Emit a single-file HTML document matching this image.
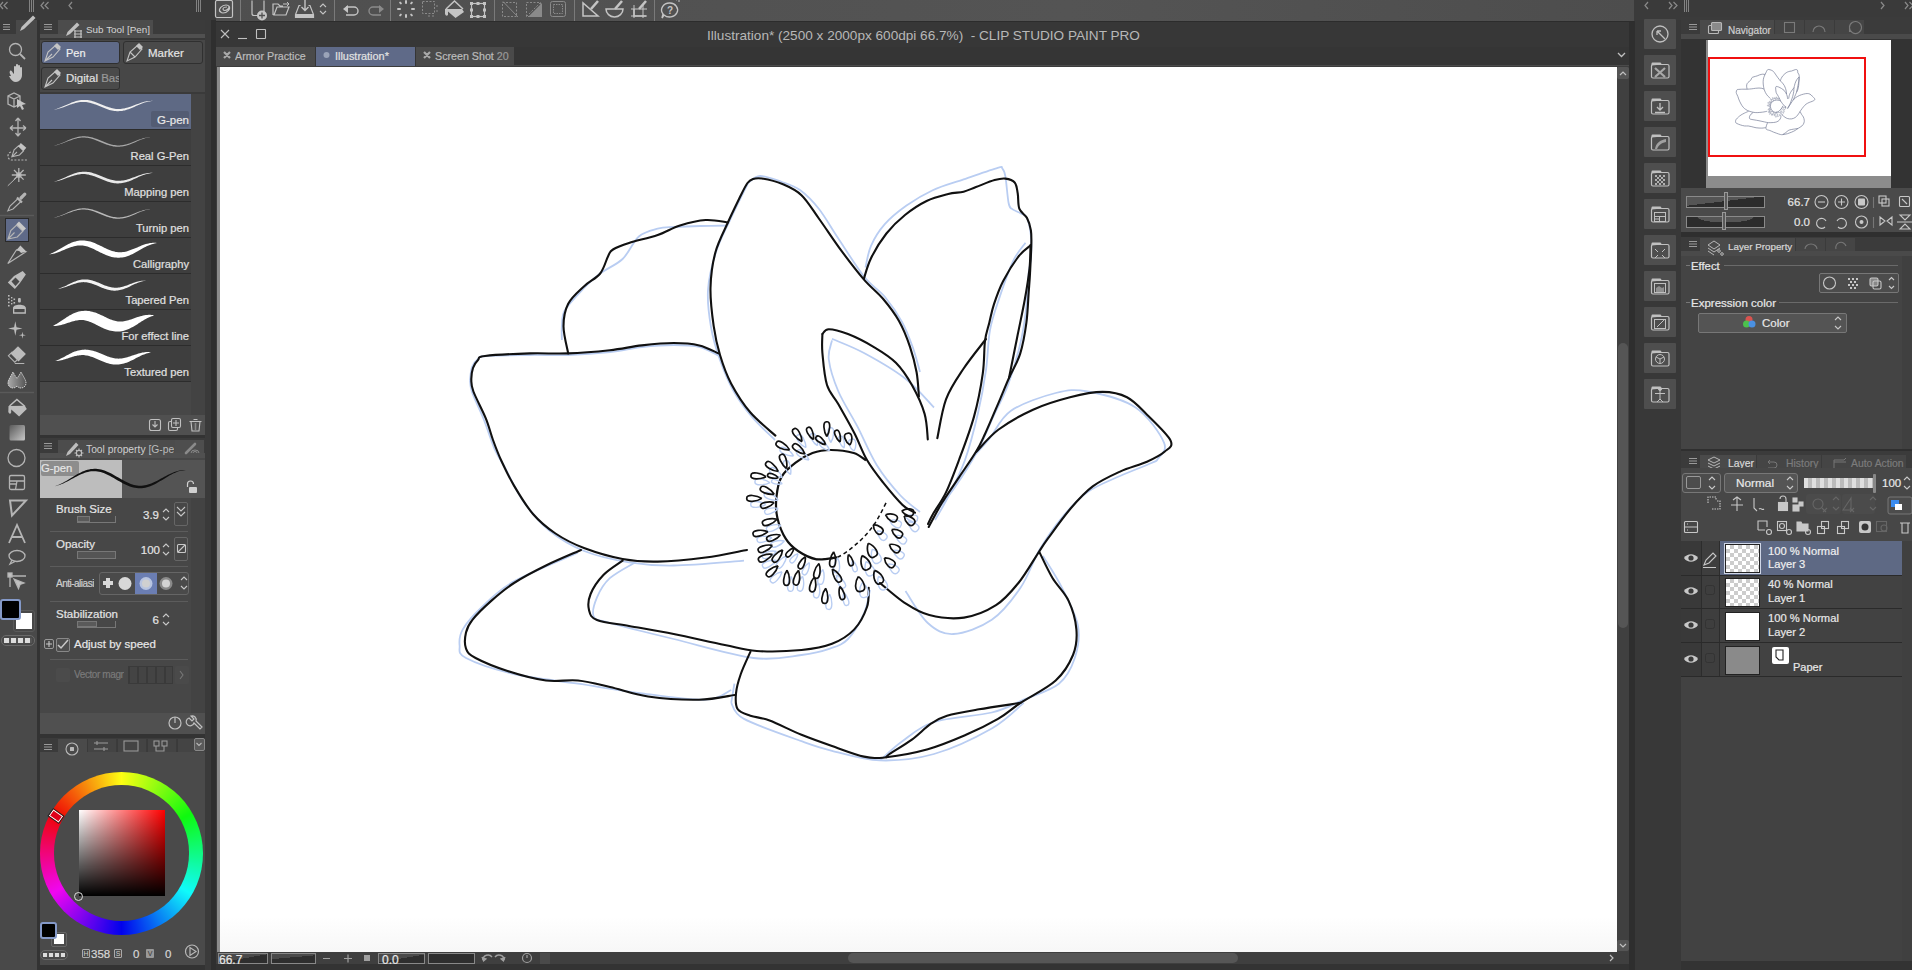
<!DOCTYPE html>
<html><head><meta charset="utf-8">
<style>
*{box-sizing:border-box;margin:0;padding:0}
html,body{width:1912px;height:970px;overflow:hidden;background:#383838;font-family:"Liberation Sans",sans-serif;color:#d8d8d8}
.a{position:absolute}
svg{position:absolute;overflow:visible}
.t{position:absolute;white-space:nowrap;line-height:1;margin-top:1px;-webkit-text-stroke:0.2px currentColor}
.ic{fill:none;stroke:#b4b4b4;stroke-width:1.3}
</style></head><body>
<!-- ===== top strip ===== -->
<div class="a" style="left:0;top:0;width:1912px;height:21px;background:#3a3a3a"></div>
<div class="a" style="left:216px;top:0;width:1418px;height:21px;background:linear-gradient(90deg,#4f4f4f,#545454 60%,#4d4d4d)"></div>

<!-- ===== left tool column ===== -->
<div class="a" style="left:0;top:20px;width:37px;height:950px;background:#494949"></div>
<div class="a" style="left:37px;top:20px;width:3px;height:950px;background:#333"></div>
<!-- sub tool panel -->
<div class="a" style="left:40px;top:20px;width:165px;height:418px;background:#474747"></div>
<div class="a" style="left:40px;top:20px;width:165px;height:19px;background:#3b3b3b"></div>
<div class="a" style="left:58px;top:20px;width:95px;height:15px;background:#4c4c4c"></div>
<div class="a" style="left:40px;top:94px;width:151px;height:288px;background:#3e3e3e"></div>
<div class="a" style="left:191px;top:94px;width:14px;height:321px;background:#434343"></div>
<div class="a" style="left:40px;top:415px;width:165px;height:20px;background:#505050"></div>
<div class="a" style="left:40px;top:435px;width:165px;height:3px;background:#333"></div>
<!-- tool property panel -->
<div class="a" style="left:40px;top:438px;width:165px;height:295px;background:#474747"></div>
<div class="a" style="left:40px;top:438px;width:165px;height:20px;background:#3b3b3b"></div>
<div class="a" style="left:58px;top:440px;width:120px;height:18px;background:#4c4c4c"></div>
<div class="a" style="left:40px;top:713px;width:165px;height:21px;background:#505050"></div>
<div class="a" style="left:40px;top:734px;width:165px;height:4px;background:#333"></div>
<!-- color panel -->
<div class="a" style="left:40px;top:738px;width:165px;height:227px;background:#4a4a4a"></div>
<div class="a" style="left:40px;top:738px;width:165px;height:14px;background:#3b3b3b"></div>
<div class="a" style="left:40px;top:965px;width:176px;height:5px;background:#333"></div>
<div class="a" style="left:205px;top:20px;width:6px;height:950px;background:#3a3a3a"></div>
<div class="a" style="left:211px;top:20px;width:5px;height:950px;background:#2f2f2f"></div>

<!-- ===== canvas window ===== -->
<div class="a" style="left:216px;top:21px;width:1418px;height:26px;background:#373737"></div>
<div class="a" style="left:216px;top:47px;width:1418px;height:20px;background:#353535"></div>
<div class="a" style="left:216px;top:66px;width:1413px;height:886px;background:#3c3c3c"></div>
<div class="a" style="left:217px;top:67px;width:3px;height:885px;background:#8c8c8c"></div>
<div class="a" style="left:220px;top:67px;width:1397px;height:885px;background:linear-gradient(#fff 96%,#f7f7f7)"></div>
<div class="a" style="left:1617px;top:67px;width:12px;height:885px;background:#404040"></div>
<div class="a" style="left:1618px;top:343px;width:10px;height:285px;border-radius:5px;background:#555"></div>
<div class="a" style="left:216px;top:952px;width:1418px;height:12px;background:#3f3f3f"></div>
<div class="a" style="left:216px;top:964px;width:1418px;height:6px;background:#333"></div>
<div class="a" style="left:1629px;top:21px;width:6px;height:949px;background:#2e2e2e"></div>

<!-- ===== right column ===== -->
<div class="a" style="left:1635px;top:20px;width:46px;height:950px;background:#383838"></div>
<div class="a" style="left:1681px;top:17px;width:231px;height:21px;background:#3b3b3b"></div>
<div class="a" style="left:1681px;top:38px;width:231px;height:150px;background:#333"></div>
<div class="a" style="left:1681px;top:188px;width:231px;height:44px;background:#4a4a4a"></div>
<div class="a" style="left:1681px;top:232px;width:231px;height:5px;background:#2f2f2f"></div>
<div class="a" style="left:1681px;top:237px;width:231px;height:19px;background:#3b3b3b"></div>
<div class="a" style="left:1681px;top:256px;width:231px;height:193px;background:#444"></div>
<div class="a" style="left:1681px;top:449px;width:231px;height:2px;background:#2f2f2f"></div>
<div class="a" style="left:1681px;top:451px;width:231px;height:17px;background:#3b3b3b"></div>
<div class="a" style="left:1681px;top:468px;width:231px;height:73px;background:#474747"></div>
<div class="a" style="left:1681px;top:541px;width:231px;height:420px;background:#424242"></div>
<div class="a" style="left:1681px;top:961px;width:231px;height:9px;background:#333"></div>
<svg width="1912" height="970" style="left:0;top:0"><path d="M561.9,340.0 C561.9,337.7 561.4,331.0 561.9,326.0 C562.4,321.0 561.3,316.3 565.0,310.0 C568.7,303.7 578.2,294.1 584.0,288.0 C589.8,281.9 593.6,278.3 600.0,273.5 C606.4,268.7 616.2,265.1 622.6,259.0 C629.0,252.9 632.8,241.8 638.6,236.7 C644.5,231.6 651.9,230.3 657.7,228.7 C663.6,227.1 666.7,227.4 673.7,227.0 C680.8,226.6 691.0,226.2 700.0,226.0 C709.0,225.8 723.3,225.6 728.0,225.5" stroke="#b9cdf2" stroke-width="1.8" fill="none"/>
<path d="M865.5,267.5 C866.4,263.9 867.8,253.0 871.0,245.8 C874.2,238.6 878.9,230.9 884.8,224.2 C890.7,217.5 898.5,211.3 906.5,205.6 C914.5,199.9 923.2,194.6 932.7,190.2 C942.2,185.8 952.8,183.1 963.6,179.4 C974.4,175.7 991.2,169.6 997.7,167.8 C1004.2,166.0 1001.0,167.1 1002.3,168.5 C1003.6,169.9 1004.4,170.6 1005.4,176.3 C1006.4,182.0 1007.5,197.1 1008.5,202.5 C1009.5,207.9 1009.6,206.9 1011.6,208.7 C1013.6,210.5 1018.2,211.8 1020.8,213.4 C1023.4,215.0 1025.3,214.1 1027.0,218.0 C1028.7,221.9 1030.3,229.9 1031.0,236.6 C1031.7,243.3 1031.4,252.0 1031.0,258.2 C1030.6,264.4 1029.4,265.0 1028.6,273.6 C1027.8,282.2 1027.4,298.1 1026.0,310.0 C1024.6,321.9 1023.0,332.5 1020.0,345.0 C1017.0,357.5 1012.3,373.3 1008.0,385.0 C1003.7,396.7 999.0,404.2 994.0,415.0 C989.0,425.8 984.5,438.0 978.0,450.0 C971.5,462.0 962.2,476.5 955.0,487.0 C947.8,497.5 938.3,508.7 935.0,513.0" stroke="#b9cdf2" stroke-width="1.8" fill="none"/>
<path d="M748.0,183.0 C750.0,181.8 754.3,176.2 760.0,176.0 C765.7,175.8 775.3,179.7 782.0,182.0 C788.7,184.3 793.8,185.5 800.0,190.0 C806.2,194.5 812.7,201.0 819.0,209.0 C825.3,217.0 830.5,226.8 838.0,238.0 C845.5,249.2 856.2,266.7 864.0,276.5 C871.8,286.3 878.7,289.4 885.0,297.0 C891.3,304.6 897.3,313.5 902.0,322.0 C906.7,330.5 910.0,339.7 913.0,348.0 C916.0,356.3 918.8,368.0 920.0,372.0" stroke="#b9cdf2" stroke-width="1.8" fill="none"/>
<path d="M748.0,183.0 C745.0,189.2 735.3,208.5 730.0,220.0 C724.7,231.5 719.7,240.3 716.0,252.0 C712.3,263.7 708.8,277.5 708.0,290.0 C707.2,302.5 709.0,315.3 711.0,327.0 C713.0,338.7 716.3,349.5 720.0,360.0 C723.7,370.5 727.7,380.5 733.0,390.0 C738.3,399.5 745.0,408.7 752.0,417.0 C759.0,425.3 771.2,436.2 775.0,440.0" stroke="#b9cdf2" stroke-width="1.8" fill="none"/>
<path d="M832.0,340.4 C831.5,343.6 827.7,351.0 828.8,359.5 C829.9,368.0 833.6,380.3 838.4,391.5 C843.2,402.7 851.1,414.4 857.5,426.6 C863.9,438.9 869.6,453.6 876.7,465.0 C883.8,476.4 892.8,487.2 900.0,495.0 C907.2,502.8 916.7,509.2 920.0,512.0" stroke="#b9cdf2" stroke-width="1.8" fill="none"/>
<path d="M832.0,338.8 C837.3,341.2 851.8,346.4 864.0,353.0 C876.2,359.6 893.8,369.6 905.5,378.7 C917.2,387.8 929.2,402.7 934.0,407.5" stroke="#b9cdf2" stroke-width="1.8" fill="none"/>
<path d="M975.0,455.0 C977.5,452.2 984.0,445.4 990.0,438.0 C996.0,430.6 1000.0,418.2 1011.0,410.7 C1022.0,403.2 1042.9,396.2 1055.7,393.0 C1068.5,389.8 1074.3,389.1 1087.6,391.5 C1100.9,393.9 1122.9,399.0 1135.6,407.5 C1148.3,416.0 1160.3,434.1 1164.0,442.6 C1167.7,451.1 1160.1,455.2 1158.0,458.6 C1155.9,462.0 1157.8,460.1 1151.5,463.0 C1145.2,465.9 1130.7,471.2 1120.0,476.0 C1109.3,480.8 1097.3,485.1 1087.6,492.0 C1077.9,498.9 1070.0,507.9 1062.0,517.5 C1054.0,527.1 1046.6,537.8 1039.7,549.5 C1032.8,561.2 1028.5,576.1 1020.5,587.8 C1012.5,599.5 1003.0,612.1 991.8,619.8 C980.6,627.5 964.1,633.5 953.4,634.0 C942.7,634.5 935.8,630.2 927.8,623.0 C919.8,615.8 909.2,596.3 905.5,591.0" stroke="#b9cdf2" stroke-width="1.8" fill="none"/>
<path d="M1042.9,555.9 C1046.1,561.2 1056.2,576.1 1062.0,587.8 C1067.8,599.5 1075.9,614.3 1078.0,626.0 C1080.1,637.7 1078.0,648.4 1074.8,658.0 C1071.6,667.6 1067.4,676.8 1058.9,683.7 C1050.4,690.7 1034.9,694.9 1023.7,699.7 C1012.5,704.5 1006.8,708.8 991.8,712.5 C976.8,716.2 948.9,717.2 934.0,722.0 C919.1,726.8 911.3,734.8 902.3,741.2 C893.3,747.6 883.7,757.2 880.0,760.4" stroke="#b9cdf2" stroke-width="1.8" fill="none"/>
<path d="M731.2,702.9 C733.3,705.6 732.3,712.5 744.0,718.9 C755.7,725.3 786.8,735.9 801.5,741.2 C816.2,746.5 818.9,747.6 832.0,750.8 C845.1,754.0 863.0,759.9 880.0,760.4 C897.0,760.9 915.4,759.3 934.0,754.0 C952.6,748.7 976.8,737.0 991.8,728.5 C1006.8,720.0 1018.4,707.2 1023.7,702.9" stroke="#b9cdf2" stroke-width="1.8" fill="none"/>
<path d="M734.4,683.7 C733.9,686.9 731.7,699.7 731.2,702.9" stroke="#b9cdf2" stroke-width="1.8" fill="none"/>
<path d="M504.3,466.4 C507.5,472.2 516.0,490.9 523.5,501.5 C531.0,512.1 538.9,522.0 549.0,530.3 C559.1,538.5 570.9,545.7 584.2,551.0 C597.5,556.3 614.1,559.9 629.0,562.3 C643.9,564.7 654.5,565.8 673.7,565.5 C692.9,565.2 732.3,561.5 744.0,560.7" stroke="#b9cdf2" stroke-width="1.8" fill="none"/>
<path d="M577.8,552.7 C567.2,557.5 530.0,572.4 514.0,581.4 C498.0,590.4 490.5,599.0 482.0,607.0 C473.5,615.0 466.5,623.0 462.8,629.4 C459.1,635.8 459.1,640.6 459.6,645.4 C460.1,650.2 456.9,653.2 466.0,658.0 C475.1,662.8 495.3,669.7 514.0,674.0 C532.7,678.3 556.7,680.5 578.0,683.7 C599.3,686.9 620.5,690.6 641.8,693.3 C663.1,696.0 690.8,700.2 705.7,699.7 C720.6,699.2 727.0,691.6 731.2,690.0" stroke="#b9cdf2" stroke-width="1.8" fill="none"/>
<path d="M635.4,562.3 C631.1,564.9 616.2,572.4 609.8,578.2 C603.4,584.1 599.7,591.0 597.0,597.4 C594.3,603.8 591.7,612.3 593.8,616.6 C595.9,620.9 596.5,619.3 609.8,623.0 C623.1,626.7 649.7,633.2 673.7,639.0 C697.7,644.8 732.3,655.3 753.6,658.0 C774.9,660.7 788.8,656.6 801.5,655.0 C814.2,653.4 822.2,651.3 830.0,648.6 C837.8,645.9 842.3,644.9 848.0,639.0 C853.7,633.1 860.3,621.6 864.0,613.4 C867.7,605.2 869.0,593.9 870.0,590.0" stroke="#b9cdf2" stroke-width="1.8" fill="none"/>
<path d="M470.0,380.0 C470.3,377.8 470.7,370.5 472.0,367.0 C473.3,363.5 475.7,360.8 478.0,359.0 C480.3,357.2 477.3,356.7 486.0,356.0 C494.7,355.3 516.3,355.2 530.0,355.0 C543.7,354.8 554.7,355.5 568.0,355.0 C581.3,354.5 597.7,353.3 610.0,352.0 C622.3,350.7 631.3,348.2 642.0,347.0 C652.7,345.8 664.3,345.0 674.0,345.0 C683.7,345.0 692.5,345.2 700.0,347.0 C707.5,348.8 715.8,354.5 719.0,356.0" stroke="#b9cdf2" stroke-width="1.8" fill="none"/>
<path d="M470.0,380.0 C470.3,382.0 469.7,385.3 472.0,392.0 C474.3,398.7 480.2,410.3 484.0,420.0 C487.8,429.7 491.6,442.3 495.0,450.0 C498.4,457.7 502.8,463.7 504.3,466.4" stroke="#b9cdf2" stroke-width="1.8" fill="none"/>
<path d="M1025.5,242.7 C1023.4,245.8 1017.4,252.0 1013.0,261.3 C1008.6,270.6 1003.0,286.9 999.2,298.4 C995.4,309.8 992.2,318.1 990.0,330.0 C987.8,341.9 988.0,356.2 986.0,370.0 C984.0,383.8 981.5,398.0 978.0,413.0 C974.5,428.0 970.0,446.0 965.0,460.0 C960.0,474.0 953.0,487.0 948.0,497.0 C943.0,507.0 937.2,516.2 935.0,520.0" stroke="#b9cdf2" stroke-width="1.8" fill="none"/>
<path d="M568.2,353.4 C567.4,348.9 563.5,334.5 563.5,326.2 C563.5,317.9 564.8,310.5 568.2,303.8 C571.7,297.1 578.9,291.2 584.2,286.2 C589.5,281.1 596.2,278.6 600.2,273.5 C604.2,268.4 606.1,259.9 608.2,255.9 C610.3,251.9 609.5,251.7 613.0,249.5 C616.5,247.3 621.5,245.4 629.0,243.0 C636.5,240.6 649.2,237.9 657.7,235.0 C666.2,232.1 672.0,228.0 680.0,225.5 C688.0,223.0 697.7,220.5 705.7,220.0 C713.7,219.5 724.3,221.9 728.0,222.3" stroke="#111" stroke-width="2.1" fill="none" stroke-linecap="round" stroke-linejoin="round"/>
<path d="M747.0,550.0 C740.1,551.2 720.6,555.6 705.7,557.5 C690.8,559.4 671.6,561.4 657.7,561.6 C643.9,561.9 634.9,561.3 622.6,559.0 C610.3,556.7 595.2,552.2 584.0,548.0 C572.8,543.8 564.0,539.2 555.5,533.5 C547.0,527.8 539.9,522.0 533.0,514.0 C526.1,506.0 519.3,494.6 514.0,485.6 C508.7,476.6 504.5,467.6 501.0,460.0 C497.5,452.4 495.5,446.9 493.0,440.0 C490.5,433.1 489.1,426.5 485.8,418.4 C482.5,410.3 475.8,397.9 473.4,391.5 C471.0,385.1 471.4,383.9 471.3,380.0 C471.2,376.1 471.9,371.3 473.0,368.0 C474.1,364.7 476.0,362.0 478.0,360.0 C480.0,358.0 476.3,357.1 485.0,356.0 C493.7,354.9 516.1,353.8 530.0,353.4 C543.9,353.0 554.9,353.9 568.2,353.4 C581.5,352.9 597.5,351.5 609.8,350.2 C622.1,348.9 631.1,346.6 641.8,345.4 C652.4,344.2 664.1,343.0 673.7,343.0 C683.3,343.0 691.8,343.7 699.3,345.4 C706.8,347.1 715.3,352.1 718.5,353.4" stroke="#111" stroke-width="2.1" fill="none" stroke-linecap="round" stroke-linejoin="round"/>
<path d="M775.4,435.6 C771.2,431.8 757.8,421.1 750.4,412.5 C743.0,403.9 736.3,393.3 731.2,383.7 C726.1,374.1 722.9,364.6 720.0,355.0 C717.1,345.4 715.3,337.4 713.7,326.2 C712.1,315.0 710.2,300.1 710.5,287.8 C710.8,275.6 712.4,263.6 715.3,252.7 C718.2,241.8 723.7,231.9 728.0,222.3 C732.3,212.7 737.8,201.6 741.0,195.0 C744.2,188.4 745.5,185.7 747.5,183.0 C749.5,180.3 750.6,179.8 753.0,179.0 C755.4,178.2 757.1,177.7 762.0,178.5 C766.9,179.3 775.8,181.2 782.4,184.0 C789.0,186.8 795.4,189.4 801.5,195.2 C807.6,201.0 812.5,209.7 819.2,219.0 C825.9,228.3 834.0,240.8 841.5,250.9 C849.0,261.0 857.1,271.6 864.0,279.6 C870.9,287.6 877.2,291.9 883.0,298.8 C888.8,305.7 894.5,313.0 899.0,321.0 C903.5,329.0 907.1,338.2 910.0,346.8 C912.9,355.4 915.1,364.1 916.6,372.3 C918.1,380.6 918.5,392.3 918.9,396.3" stroke="#111" stroke-width="2.1" fill="none" stroke-linecap="round" stroke-linejoin="round"/>
<path d="M864.0,278.3 C865.2,274.9 867.3,265.7 871.0,258.2 C874.7,250.7 880.7,240.7 886.4,233.5 C892.1,226.3 898.3,220.4 905.0,215.0 C911.7,209.6 919.4,204.5 926.6,201.0 C933.8,197.5 942.0,195.6 948.2,194.0 C954.4,192.4 959.0,192.9 963.6,191.7 C968.2,190.5 970.8,188.9 976.0,187.0 C981.2,185.1 989.7,181.5 994.6,180.1 C999.5,178.7 1002.0,178.2 1005.4,178.6 C1008.8,179.0 1012.7,180.1 1014.7,182.5 C1016.8,184.9 1016.9,188.9 1017.7,193.3 C1018.5,197.7 1017.8,204.6 1019.3,208.7 C1020.8,212.8 1025.1,214.4 1027.0,218.0 C1028.9,221.6 1030.2,225.8 1030.9,230.4 C1031.6,235.0 1031.5,238.6 1031.3,245.8 C1031.1,253.0 1030.4,265.9 1030.0,273.6 C1029.6,281.3 1029.3,283.8 1028.7,292.0 C1028.1,300.2 1027.8,312.4 1026.4,322.7 C1025.0,333.0 1023.1,344.4 1020.2,353.6 C1017.3,362.8 1012.4,370.4 1009.0,378.0 C1005.6,385.6 1004.0,390.0 1000.0,399.3 C996.0,408.6 989.0,425.3 985.0,434.0 C981.0,442.7 980.6,444.1 976.3,451.3 C972.0,458.5 964.8,468.6 959.0,477.3 C953.2,486.0 946.8,495.0 941.7,503.3 C936.7,511.6 930.9,523.0 928.7,527.0" stroke="#111" stroke-width="2.1" fill="none" stroke-linecap="round" stroke-linejoin="round"/>
<path d="M1030.5,245.0 C1030.3,248.9 1030.5,259.5 1029.5,268.6 C1028.5,277.7 1026.9,287.9 1024.8,299.5 C1022.7,311.1 1019.6,325.1 1017.0,338.2 C1014.4,351.3 1010.3,371.4 1009.0,378.0" stroke="#111" stroke-width="2.1" fill="none" stroke-linecap="round" stroke-linejoin="round"/>
<path d="M1031.0,245.0 C1028.9,246.9 1023.2,250.3 1018.6,256.3 C1014.0,262.3 1007.3,273.0 1003.2,281.0 C999.1,289.0 996.3,297.2 994.0,304.2 C991.7,311.1 990.8,316.6 989.3,322.7 C987.8,328.8 986.1,332.4 985.0,340.8 C983.9,349.2 984.6,360.7 982.8,373.3 C981.0,385.9 978.0,402.2 974.0,416.6 C970.0,431.1 963.7,447.4 959.0,460.0 C954.3,472.6 950.3,483.4 946.0,492.4 C941.7,501.4 936.0,508.7 933.0,514.0 C930.0,519.3 928.8,522.3 928.0,524.0" stroke="#111" stroke-width="2.1" fill="none" stroke-linecap="round" stroke-linejoin="round"/>
<path d="M986.0,339.0 C982.2,344.0 970.0,358.9 963.3,369.0 C956.6,379.1 950.3,387.8 946.0,399.3 C941.7,410.9 938.8,431.8 937.3,438.3" stroke="#111" stroke-width="2.1" fill="none" stroke-linecap="round" stroke-linejoin="round"/>
<path d="M822.4,334.0 C823.5,333.2 824.5,329.2 828.8,329.2 C833.1,329.2 840.5,331.1 848.0,334.0 C855.5,336.9 865.5,342.0 873.5,346.8 C881.5,351.6 889.5,356.3 895.9,362.7 C902.3,369.1 907.1,376.5 911.9,385.0 C916.7,393.5 922.0,404.8 924.6,413.9 C927.2,423.0 927.3,435.1 927.8,439.4" stroke="#111" stroke-width="2.1" fill="none" stroke-linecap="round" stroke-linejoin="round"/>
<path d="M822.4,334.0 C822.4,337.2 821.6,344.5 822.4,353.0 C823.2,361.5 824.3,376.4 827.0,385.0 C829.7,393.6 833.9,396.3 838.4,404.3 C842.9,412.3 849.5,423.7 854.3,433.0 C859.1,442.3 862.2,451.8 867.0,460.0 C871.8,468.2 877.1,474.9 883.0,482.4 C888.9,489.8 897.0,499.6 902.3,504.7 C907.6,509.8 912.9,511.4 915.0,512.7" stroke="#111" stroke-width="2.1" fill="none" stroke-linecap="round" stroke-linejoin="round"/>
<path d="M976.3,451.8 C980.0,448.1 989.1,436.5 998.6,429.5 C1008.1,422.5 1021.1,415.1 1033.0,409.7 C1044.9,404.3 1058.4,400.3 1070.0,397.3 C1081.6,394.3 1093.1,391.9 1102.6,391.9 C1112.1,391.9 1119.6,393.5 1127.0,397.3 C1134.4,401.1 1139.7,407.5 1147.0,414.7 C1154.3,421.9 1167.7,434.4 1170.6,440.6 C1173.5,446.8 1168.4,448.3 1164.5,451.8 C1160.6,455.3 1154.4,458.4 1147.0,461.7 C1139.6,465.0 1129.0,467.5 1120.0,471.6 C1111.0,475.7 1101.0,480.2 1092.7,486.4 C1084.4,492.6 1077.9,500.0 1070.4,508.7 C1063.0,517.4 1053.4,531.0 1048.0,538.4 C1042.6,545.8 1042.9,545.9 1038.0,553.3 C1033.1,560.7 1025.4,574.4 1018.4,583.0 C1011.4,591.6 1005.1,599.4 996.0,605.2 C986.9,611.0 975.1,616.0 964.0,617.6 C952.9,619.2 939.2,617.6 929.3,615.1 C919.4,612.6 912.8,608.1 904.6,602.8 C896.4,597.4 884.1,586.3 880.0,583.0" stroke="#111" stroke-width="2.1" fill="none" stroke-linecap="round" stroke-linejoin="round"/>
<path d="M581.0,550.0 C575.2,552.6 557.2,560.0 546.0,565.5 C534.8,571.0 523.1,577.1 514.0,583.0 C504.9,588.9 498.4,594.5 491.5,600.6 C484.6,606.7 476.6,614.5 472.4,619.8 C468.1,625.1 467.1,627.8 466.0,632.6 C464.9,637.4 464.4,644.4 466.0,648.6 C467.6,652.8 468.7,654.3 475.6,658.0 C482.5,661.7 495.8,667.2 507.5,671.0 C519.2,674.8 534.2,678.9 546.0,680.5 C557.8,682.1 567.3,679.4 578.0,680.5 C588.7,681.6 598.3,684.3 610.0,687.0 C621.7,689.7 633.2,694.4 648.0,696.5 C662.8,698.6 684.6,700.0 699.0,699.7 C713.4,699.5 728.5,695.8 734.4,695.0" stroke="#111" stroke-width="2.1" fill="none" stroke-linecap="round" stroke-linejoin="round"/>
<path d="M622.6,560.7 C619.4,563.1 608.7,569.5 603.4,575.0 C598.1,580.5 593.0,588.2 590.6,594.0 C588.2,599.8 587.9,605.7 589.0,610.0 C590.1,614.3 590.3,617.3 597.0,620.0 C603.7,622.7 616.2,623.7 629.0,626.0 C641.8,628.3 657.7,630.8 673.7,634.0 C689.7,637.2 710.9,642.2 724.8,645.0 C738.6,647.8 744.0,650.2 756.8,651.0 C769.6,651.8 789.0,651.2 801.5,650.0 C814.0,648.8 823.2,647.2 832.0,643.8 C840.8,640.4 848.5,635.5 854.3,629.4 C860.1,623.3 864.6,613.9 867.0,607.0 C869.4,600.1 868.4,591.0 868.7,587.8" stroke="#111" stroke-width="2.1" fill="none" stroke-linecap="round" stroke-linejoin="round"/>
<path d="M750.4,651.8 C748.8,655.5 743.2,667.1 740.8,674.0 C738.4,680.9 736.5,687.5 736.0,693.3 C735.5,699.1 735.2,705.3 737.6,709.0 C740.0,712.7 745.1,713.8 750.4,715.7 C755.7,717.6 761.1,717.3 769.6,720.5 C778.1,723.7 791.1,730.5 801.5,734.8 C811.9,739.0 821.6,742.4 832.0,746.0 C842.4,749.6 855.0,754.7 864.0,756.6 C873.0,758.5 875.7,758.4 886.3,757.2 C896.9,756.0 914.5,752.9 927.8,749.2 C941.1,745.5 954.3,739.8 966.0,734.8 C977.7,729.8 988.9,724.2 998.0,718.9 C1007.1,713.6 1010.9,709.3 1020.5,702.9 C1030.1,696.5 1047.0,688.5 1055.7,680.5 C1064.5,672.5 1069.5,663.5 1073.0,655.0 C1076.5,646.5 1077.2,638.5 1076.4,629.4 C1075.7,620.3 1072.5,609.2 1068.5,600.6 C1064.5,592.0 1057.3,586.0 1052.5,578.0 C1047.7,570.0 1041.8,556.9 1039.7,552.7" stroke="#111" stroke-width="2.1" fill="none" stroke-linecap="round" stroke-linejoin="round"/>
<path d="M1020.5,702.9 C1013.6,704.0 991.2,707.2 979.0,709.3 C966.8,711.4 955.0,713.3 947.0,715.7 C939.0,718.1 936.9,719.7 931.0,723.7 C925.1,727.7 918.8,734.6 911.9,739.6 C905.0,744.6 893.8,751.1 889.5,754.0 C885.2,756.9 886.8,756.7 886.3,757.2" stroke="#111" stroke-width="2.1" fill="none" stroke-linecap="round" stroke-linejoin="round"/>
<path d="M866.0,460.4 C864.0,459.2 859.5,454.7 853.7,453.0 C847.9,451.3 837.9,450.0 831.0,450.0 C824.1,450.0 818.3,450.9 812.5,453.0 C806.7,455.1 801.2,458.4 796.0,462.4 C790.8,466.4 784.8,471.0 781.5,476.9 C778.2,482.8 777.1,490.6 776.4,497.5 C775.7,504.4 775.8,511.1 777.4,518.0 C779.0,524.9 782.3,533.2 785.7,538.7 C789.1,544.2 792.9,547.6 798.0,551.0 C803.1,554.4 810.1,558.2 816.6,559.3 C823.1,560.3 833.8,557.6 837.2,557.3" stroke="#111" stroke-width="2.2" fill="none"/>
<path d="M816.6,559.3 C820.0,559.0 830.3,560.0 837.2,557.3 C844.1,554.5 851.6,548.3 857.8,542.8 C864.0,537.3 869.5,531.2 874.3,524.3 C879.1,517.4 884.6,505.4 886.7,501.6" stroke="#111" stroke-width="1.5" fill="none" stroke-dasharray="4 3"/>
<path d="M802.0,441.6 C797.0,439.5 789.3,431.2 793.7,429.1 C797.3,425.8 802.0,436.2 802.0,441.6 M813.4,439.6 C809.3,437.1 803.8,428.7 807.9,427.5 C811.5,425.2 814.2,434.9 813.4,439.6 M826.8,436.5 C823.9,432.1 822.1,421.1 826.8,421.8 C831.5,421.1 829.7,432.1 826.8,436.5 M825.7,444.7 C821.3,444.2 813.3,439.4 816.3,436.8 C818.4,433.4 824.5,440.4 825.7,444.7 M805.0,454.0 C799.6,453.6 789.6,448.1 793.2,444.8 C795.6,440.5 803.3,448.9 805.0,454.0 M789.6,449.9 C784.2,450.4 773.5,446.5 776.4,442.7 C778.1,438.1 787.1,445.1 789.6,449.9 M786.5,468.5 C782.1,465.4 776.4,455.5 781.2,454.5 C785.4,452.1 787.7,463.2 786.5,468.5 M778.3,471.5 C772.9,471.3 762.7,466.1 766.2,462.7 C768.4,458.3 776.4,466.4 778.3,471.5 M766.0,476.7 C761.3,479.3 749.9,480.2 751.0,475.5 C750.7,470.6 761.8,473.3 766.0,476.7 M778.3,477.7 C774.5,478.9 766.2,478.0 767.7,474.8 C768.1,471.3 775.7,474.7 778.3,477.7 M774.2,494.2 C768.9,495.0 757.9,491.9 760.6,487.9 C761.9,483.2 771.4,489.6 774.2,494.2 M761.8,498.4 C757.3,501.4 746.0,503.2 746.8,498.4 C746.0,493.6 757.3,495.4 761.8,498.4 M774.2,502.5 C771.0,506.4 761.4,511.0 760.8,506.5 C758.9,502.4 769.4,501.0 774.2,502.5 M777.0,519.3 C773.6,523.5 763.3,528.5 762.6,523.7 C760.5,519.3 771.8,517.7 777.0,519.3 M767.9,531.7 C764.0,535.4 753.2,539.1 753.1,534.2 C751.6,529.6 763.0,529.5 767.9,531.7 M780.4,535.0 C777.3,539.1 767.7,544.1 766.9,539.5 C764.7,535.5 775.4,533.7 780.4,535.0 M772.4,545.4 C769.3,549.8 759.5,555.6 758.4,550.8 C756.0,546.6 767.1,544.2 772.4,545.4 M772.4,554.4 C769.5,559.0 760.0,565.2 758.7,560.5 C756.1,556.4 767.1,553.5 772.4,554.4 M782.6,549.9 C782.1,555.3 776.5,565.2 773.2,561.6 C769.0,559.2 777.4,551.5 782.6,549.9 M794.0,547.6 C793.5,551.7 789.0,559.3 786.6,556.4 C783.4,554.5 790.0,548.8 794.0,547.6 M778.0,565.8 C776.7,571.1 769.6,580.0 767.0,575.9 C763.2,572.9 772.7,566.6 778.0,565.8 M798.5,570.3 C800.5,575.3 800.1,586.7 795.5,585.0 C790.7,584.8 794.7,574.1 798.5,570.3 M787.0,570.3 C789.8,574.9 791.2,586.2 786.4,585.3 C781.6,585.9 783.8,574.7 787.0,570.3 M814.4,577.0 C816.6,582.0 816.4,593.3 811.8,591.8 C807.0,591.7 810.7,580.9 814.4,577.0 M805.3,556.7 C805.9,561.4 802.9,571.0 799.4,568.5 C795.4,567.2 801.2,559.1 805.3,556.7 M825.7,588.4 C828.3,593.1 829.2,604.5 824.5,603.4 C819.6,603.7 822.3,592.6 825.7,588.4 M818.9,563.5 C820.9,568.5 820.5,579.9 815.9,578.2 C811.1,578.0 815.1,567.3 818.9,563.5 M833.7,551.9 C836.2,556.7 836.8,568.1 832.1,566.8 C827.3,567.1 830.2,556.1 833.7,551.9 M832.4,569.0 C837.3,571.2 844.8,579.9 840.3,581.7 C836.6,584.9 832.2,574.4 832.4,569.0 M839.9,586.5 C843.4,589.7 847.3,599.0 843.0,599.4 C839.1,601.0 838.3,591.0 839.9,586.5 M848.5,554.4 C851.7,557.1 855.5,565.1 851.8,565.6 C848.3,567.2 847.2,558.4 848.5,554.4 M858.4,576.6 C863.6,580.3 868.1,590.9 860.9,591.4 C853.9,593.3 854.7,581.8 858.4,576.6 M862.1,555.6 C868.0,558.0 874.8,567.3 867.9,569.4 C861.5,572.9 859.7,561.5 862.1,555.6 M874.5,570.4 C880.3,572.3 887.5,580.8 881.0,583.3 C875.1,587.0 872.6,576.2 874.5,570.4 M868.3,543.2 C874.3,545.4 881.4,554.5 874.5,556.8 C868.3,560.5 866.1,549.2 868.3,543.2 M884.4,558.0 C889.7,557.6 898.4,562.0 894.0,566.2 C890.6,571.2 884.8,563.3 884.4,558.0 M889.4,544.5 C894.4,543.5 903.1,546.7 899.4,551.1 C896.7,556.3 890.4,549.5 889.4,544.5 M873.3,524.7 C878.4,524.7 886.3,529.4 881.9,533.1 C878.2,537.6 873.3,529.8 873.3,524.7 M891.8,529.6 C896.8,528.6 905.5,531.8 901.8,536.3 C899.1,541.4 892.8,534.6 891.8,529.6 M885.6,514.8 C890.4,512.8 899.8,514.4 896.9,519.6 C895.2,525.3 887.6,519.6 885.6,514.8 M904.2,516.0 C909.5,515.5 918.2,519.8 913.8,524.1 C910.4,529.1 904.7,521.3 904.2,516.0 M901.7,511.0 C905.9,508.1 915.1,507.5 913.5,513.0 C913.1,518.8 904.6,515.2 901.7,511.0 M840.0,442.0 C836.5,439.3 832.2,431.0 836.1,430.3 C839.6,428.5 841.2,437.7 840.0,442.0 M850.0,445.0 C845.7,442.3 841.6,433.9 847.4,433.3 C852.9,431.5 852.7,440.7 850.0,445.0" stroke="#b9cdf2" stroke-width="1.4" fill="none" transform="translate(4,6)"/>
<path d="M802.0,441.6 C797.0,439.5 789.3,431.2 793.7,429.1 C797.3,425.8 802.0,436.2 802.0,441.6 M813.4,439.6 C809.3,437.1 803.8,428.7 807.9,427.5 C811.5,425.2 814.2,434.9 813.4,439.6 M826.8,436.5 C823.9,432.1 822.1,421.1 826.8,421.8 C831.5,421.1 829.7,432.1 826.8,436.5 M825.7,444.7 C821.3,444.2 813.3,439.4 816.3,436.8 C818.4,433.4 824.5,440.4 825.7,444.7 M805.0,454.0 C799.6,453.6 789.6,448.1 793.2,444.8 C795.6,440.5 803.3,448.9 805.0,454.0 M789.6,449.9 C784.2,450.4 773.5,446.5 776.4,442.7 C778.1,438.1 787.1,445.1 789.6,449.9 M786.5,468.5 C782.1,465.4 776.4,455.5 781.2,454.5 C785.4,452.1 787.7,463.2 786.5,468.5 M778.3,471.5 C772.9,471.3 762.7,466.1 766.2,462.7 C768.4,458.3 776.4,466.4 778.3,471.5 M766.0,476.7 C761.3,479.3 749.9,480.2 751.0,475.5 C750.7,470.6 761.8,473.3 766.0,476.7 M778.3,477.7 C774.5,478.9 766.2,478.0 767.7,474.8 C768.1,471.3 775.7,474.7 778.3,477.7 M774.2,494.2 C768.9,495.0 757.9,491.9 760.6,487.9 C761.9,483.2 771.4,489.6 774.2,494.2 M761.8,498.4 C757.3,501.4 746.0,503.2 746.8,498.4 C746.0,493.6 757.3,495.4 761.8,498.4 M774.2,502.5 C771.0,506.4 761.4,511.0 760.8,506.5 C758.9,502.4 769.4,501.0 774.2,502.5 M777.0,519.3 C773.6,523.5 763.3,528.5 762.6,523.7 C760.5,519.3 771.8,517.7 777.0,519.3 M767.9,531.7 C764.0,535.4 753.2,539.1 753.1,534.2 C751.6,529.6 763.0,529.5 767.9,531.7 M780.4,535.0 C777.3,539.1 767.7,544.1 766.9,539.5 C764.7,535.5 775.4,533.7 780.4,535.0 M772.4,545.4 C769.3,549.8 759.5,555.6 758.4,550.8 C756.0,546.6 767.1,544.2 772.4,545.4 M772.4,554.4 C769.5,559.0 760.0,565.2 758.7,560.5 C756.1,556.4 767.1,553.5 772.4,554.4 M782.6,549.9 C782.1,555.3 776.5,565.2 773.2,561.6 C769.0,559.2 777.4,551.5 782.6,549.9 M794.0,547.6 C793.5,551.7 789.0,559.3 786.6,556.4 C783.4,554.5 790.0,548.8 794.0,547.6 M778.0,565.8 C776.7,571.1 769.6,580.0 767.0,575.9 C763.2,572.9 772.7,566.6 778.0,565.8 M798.5,570.3 C800.5,575.3 800.1,586.7 795.5,585.0 C790.7,584.8 794.7,574.1 798.5,570.3 M787.0,570.3 C789.8,574.9 791.2,586.2 786.4,585.3 C781.6,585.9 783.8,574.7 787.0,570.3 M814.4,577.0 C816.6,582.0 816.4,593.3 811.8,591.8 C807.0,591.7 810.7,580.9 814.4,577.0 M805.3,556.7 C805.9,561.4 802.9,571.0 799.4,568.5 C795.4,567.2 801.2,559.1 805.3,556.7 M825.7,588.4 C828.3,593.1 829.2,604.5 824.5,603.4 C819.6,603.7 822.3,592.6 825.7,588.4 M818.9,563.5 C820.9,568.5 820.5,579.9 815.9,578.2 C811.1,578.0 815.1,567.3 818.9,563.5 M833.7,551.9 C836.2,556.7 836.8,568.1 832.1,566.8 C827.3,567.1 830.2,556.1 833.7,551.9 M832.4,569.0 C837.3,571.2 844.8,579.9 840.3,581.7 C836.6,584.9 832.2,574.4 832.4,569.0 M839.9,586.5 C843.4,589.7 847.3,599.0 843.0,599.4 C839.1,601.0 838.3,591.0 839.9,586.5 M848.5,554.4 C851.7,557.1 855.5,565.1 851.8,565.6 C848.3,567.2 847.2,558.4 848.5,554.4 M858.4,576.6 C863.6,580.3 868.1,590.9 860.9,591.4 C853.9,593.3 854.7,581.8 858.4,576.6 M862.1,555.6 C868.0,558.0 874.8,567.3 867.9,569.4 C861.5,572.9 859.7,561.5 862.1,555.6 M874.5,570.4 C880.3,572.3 887.5,580.8 881.0,583.3 C875.1,587.0 872.6,576.2 874.5,570.4 M868.3,543.2 C874.3,545.4 881.4,554.5 874.5,556.8 C868.3,560.5 866.1,549.2 868.3,543.2 M884.4,558.0 C889.7,557.6 898.4,562.0 894.0,566.2 C890.6,571.2 884.8,563.3 884.4,558.0 M889.4,544.5 C894.4,543.5 903.1,546.7 899.4,551.1 C896.7,556.3 890.4,549.5 889.4,544.5 M873.3,524.7 C878.4,524.7 886.3,529.4 881.9,533.1 C878.2,537.6 873.3,529.8 873.3,524.7 M891.8,529.6 C896.8,528.6 905.5,531.8 901.8,536.3 C899.1,541.4 892.8,534.6 891.8,529.6 M885.6,514.8 C890.4,512.8 899.8,514.4 896.9,519.6 C895.2,525.3 887.6,519.6 885.6,514.8 M904.2,516.0 C909.5,515.5 918.2,519.8 913.8,524.1 C910.4,529.1 904.7,521.3 904.2,516.0 M901.7,511.0 C905.9,508.1 915.1,507.5 913.5,513.0 C913.1,518.8 904.6,515.2 901.7,511.0 M840.0,442.0 C836.5,439.3 832.2,431.0 836.1,430.3 C839.6,428.5 841.2,437.7 840.0,442.0 M850.0,445.0 C845.7,442.3 841.6,433.9 847.4,433.3 C852.9,431.5 852.7,440.7 850.0,445.0" stroke="#111" stroke-width="1.7" fill="none"/></svg>
<!-- ===== right icon column ===== -->
<div class="a" style="left:1644px;top:19px;width:32px;height:30px;background:#4e4e4e;border-radius:1px"></div>
<div class="a" style="left:1644px;top:55px;width:32px;height:30px;background:#4e4e4e;border-radius:1px"></div>
<div class="a" style="left:1644px;top:91px;width:32px;height:30px;background:#4e4e4e;border-radius:1px"></div>
<div class="a" style="left:1644px;top:127px;width:32px;height:30px;background:#4e4e4e;border-radius:1px"></div>
<div class="a" style="left:1644px;top:163px;width:32px;height:30px;background:#4e4e4e;border-radius:1px"></div>
<div class="a" style="left:1644px;top:199px;width:32px;height:30px;background:#4e4e4e;border-radius:1px"></div>
<div class="a" style="left:1644px;top:235px;width:32px;height:30px;background:#4e4e4e;border-radius:1px"></div>
<div class="a" style="left:1644px;top:271px;width:32px;height:30px;background:#4e4e4e;border-radius:1px"></div>
<div class="a" style="left:1644px;top:307px;width:32px;height:30px;background:#4e4e4e;border-radius:1px"></div>
<div class="a" style="left:1644px;top:343px;width:32px;height:30px;background:#4e4e4e;border-radius:1px"></div>
<div class="a" style="left:1644px;top:379px;width:32px;height:30px;background:#4e4e4e;border-radius:1px"></div>

<svg style="left:0;top:0" width="1" height="1"><g stroke="#c0c0c0" stroke-width="1.3" fill="none">
<circle cx="1660" cy="34" r="8"/><path d="M1657,31l8,8M1657,31h4M1657,31v4"/>
<path d="M1651.5,65.5 v-2 a1,1 0 0 1 1,-1 h8 l1.5,2" fill="#c0c0c0" stroke="none"/><rect x="1651.5" y="64.5" width="17.5" height="13.5" rx="1.5" stroke-width="1.2"/>
<path d="M1651.5,101.5 v-2 a1,1 0 0 1 1,-1 h8 l1.5,2" fill="#c0c0c0" stroke="none"/><rect x="1651.5" y="100.5" width="17.5" height="13.5" rx="1.5" stroke-width="1.2"/>
<path d="M1651.5,137.5 v-2 a1,1 0 0 1 1,-1 h8 l1.5,2" fill="#c0c0c0" stroke="none"/><rect x="1651.5" y="136.5" width="17.5" height="13.5" rx="1.5" stroke-width="1.2"/>
<path d="M1651.5,173.5 v-2 a1,1 0 0 1 1,-1 h8 l1.5,2" fill="#c0c0c0" stroke="none"/><rect x="1651.5" y="172.5" width="17.5" height="13.5" rx="1.5" stroke-width="1.2"/>
<path d="M1651.5,209.5 v-2 a1,1 0 0 1 1,-1 h8 l1.5,2" fill="#c0c0c0" stroke="none"/><rect x="1651.5" y="208.5" width="17.5" height="13.5" rx="1.5" stroke-width="1.2"/>
<path d="M1651.5,245.5 v-2 a1,1 0 0 1 1,-1 h8 l1.5,2" fill="#c0c0c0" stroke="none"/><rect x="1651.5" y="244.5" width="17.5" height="13.5" rx="1.5" stroke-width="1.2"/>
<path d="M1651.5,281.5 v-2 a1,1 0 0 1 1,-1 h8 l1.5,2" fill="#c0c0c0" stroke="none"/><rect x="1651.5" y="280.5" width="17.5" height="13.5" rx="1.5" stroke-width="1.2"/>
<path d="M1651.5,317.5 v-2 a1,1 0 0 1 1,-1 h8 l1.5,2" fill="#c0c0c0" stroke="none"/><rect x="1651.5" y="316.5" width="17.5" height="13.5" rx="1.5" stroke-width="1.2"/>
<path d="M1651.5,353.5 v-2 a1,1 0 0 1 1,-1 h8 l1.5,2" fill="#c0c0c0" stroke="none"/><rect x="1651.5" y="352.5" width="17.5" height="13.5" rx="1.5" stroke-width="1.2"/>
<path d="M1651.5,389.5 v-2 a1,1 0 0 1 1,-1 h8 l1.5,2" fill="#c0c0c0" stroke="none"/><rect x="1651.5" y="388.5" width="17.5" height="13.5" rx="1.5" stroke-width="1.2"/>
</g>
<g stroke="#a8a8a8" stroke-width="2.2" fill="none"><path d="M1655,68l10,9M1665,68l-10,9"/></g>
<g stroke="#c0c0c0" stroke-width="1.3" fill="none"><path d="M1660,103v7M1657,107l3,3l3,-3M1655,112.5h10"/></g>
<path d="M1655,149c1,-6 5,-9 11,-10v3c-5,1 -8,4 -9,7z" fill="#a0a0a0"/>
<g fill="#b0b0b0"><rect x="1655" y="175" width="2" height="2"/><rect x="1659" y="175" width="2" height="2"/><rect x="1663" y="175" width="2" height="2"/><rect x="1657" y="177" width="2" height="2"/><rect x="1661" y="177" width="2" height="2"/><rect x="1655" y="179" width="2" height="2"/><rect x="1659" y="179" width="2" height="2"/><rect x="1663" y="179" width="2" height="2"/><rect x="1657" y="181" width="2" height="2"/><rect x="1661" y="181" width="2" height="2"/><rect x="1655" y="183" width="2" height="2"/><rect x="1659" y="183" width="2" height="2"/><rect x="1663" y="183" width="2" height="2"/></g>
<g stroke="#c0c0c0" stroke-width="1" fill="none"><rect x="1654.5" y="212.5" width="11" height="9"/><path d="M1654.5,216.5h11M1659.5,216.5v5M1654.5,219h5"/>
<path d="M1655,249l3,3M1665,249l-3,3M1655,258l3,-3M1665,258l-3,-3"/>
<rect x="1654.5" y="283.5" width="11" height="9"/>
<rect x="1654.5" y="319.5" width="11" height="9"/><path d="M1657,327l7,-7"/>
<circle cx="1660" cy="359" r="4.5"/><path d="M1656,357l4,2l4,-2M1660,359v4"/>
<path d="M1660,391v9M1655,393.5h10M1657,402l3,-3l3,3"/><circle cx="1660" cy="389" r="1.5" fill="#c0c0c0"/>
</g><path d="M1656,292v-4l3,-2l3,2l2,-1v5z" fill="#909090"/>
</svg>

<!-- ===== navigator ===== -->
<svg style="left:0;top:0" width="1" height="1"><g stroke="#9a9a9a" stroke-width="1"><path d="M1689,24.5h8M1689,27h8M1689,29.5h8M1689,241.5h8M1689,244h8M1689,246.5h8M1689,458.5h8M1689,461h8M1689,463.5h8"/></g></svg>
<div class="a" style="left:1700px;top:20px;width:74px;height:14px;background:#4a4a4a"></div>
<div class="a" style="left:1775px;top:20px;width:29px;height:14px;background:#454545"></div>
<div class="a" style="left:1805px;top:20px;width:29px;height:14px;background:#454545"></div>
<div class="a" style="left:1835px;top:20px;width:29px;height:14px;background:#454545"></div>
<div class="a" style="left:1681px;top:34px;width:231px;height:5px;background:#4a4a4a"></div>
<div class="t" style="left:1728px;top:25px;font-size:10px;color:#d0d0d0">Navigator</div>
<svg style="left:0;top:0" width="1" height="1"><g stroke="#b8b8b8" stroke-width="1.1" fill="none"><rect x="1708.5" y="25.5" width="10" height="8" rx="1"/><rect x="1711.5" y="22.5" width="10" height="8" rx="1" fill="#8a8a8a"/>
<g stroke="#7a7a7a"><rect x="1784.5" y="22.5" width="10" height="10"/><path d="M1813,32a6,6 0 0 1 12,0M1849.5,27.5a6,6 0 1 1 0,0.1M1849.5,26v6"/></g></g></svg>
<div class="a" style="left:1706px;top:40px;width:185px;height:148px;background:#8c8c8c"></div>
<div class="a" style="left:1708px;top:40px;width:183px;height:136px;background:#fff"></div>
<div class="a" style="left:1707.5px;top:56.5px;width:158px;height:100px;border:2px solid #f01010"></div>
<svg style="left:0;top:0" width="1" height="1"><g transform="translate(1683.27,49.47) scale(0.1124)"><path d="M568.2,353.4 C567.4,348.9 563.5,334.5 563.5,326.2 C563.5,317.9 564.8,310.5 568.2,303.8 C571.7,297.1 578.9,291.2 584.2,286.2 C589.5,281.1 596.2,278.6 600.2,273.5 C604.2,268.4 606.1,259.9 608.2,255.9 C610.3,251.9 609.5,251.7 613.0,249.5 C616.5,247.3 621.5,245.4 629.0,243.0 C636.5,240.6 649.2,237.9 657.7,235.0 C666.2,232.1 672.0,228.0 680.0,225.5 C688.0,223.0 697.7,220.5 705.7,220.0 C713.7,219.5 724.3,221.9 728.0,222.3 M747.0,550.0 C740.1,551.2 720.6,555.6 705.7,557.5 C690.8,559.4 671.6,561.4 657.7,561.6 C643.9,561.9 634.9,561.3 622.6,559.0 C610.3,556.7 595.2,552.2 584.0,548.0 C572.8,543.8 564.0,539.2 555.5,533.5 C547.0,527.8 539.9,522.0 533.0,514.0 C526.1,506.0 519.3,494.6 514.0,485.6 C508.7,476.6 504.5,467.6 501.0,460.0 C497.5,452.4 495.5,446.9 493.0,440.0 C490.5,433.1 489.1,426.5 485.8,418.4 C482.5,410.3 475.8,397.9 473.4,391.5 C471.0,385.1 471.4,383.9 471.3,380.0 C471.2,376.1 471.9,371.3 473.0,368.0 C474.1,364.7 476.0,362.0 478.0,360.0 C480.0,358.0 476.3,357.1 485.0,356.0 C493.7,354.9 516.1,353.8 530.0,353.4 C543.9,353.0 554.9,353.9 568.2,353.4 C581.5,352.9 597.5,351.5 609.8,350.2 C622.1,348.9 631.1,346.6 641.8,345.4 C652.4,344.2 664.1,343.0 673.7,343.0 C683.3,343.0 691.8,343.7 699.3,345.4 C706.8,347.1 715.3,352.1 718.5,353.4 M775.4,435.6 C771.2,431.8 757.8,421.1 750.4,412.5 C743.0,403.9 736.3,393.3 731.2,383.7 C726.1,374.1 722.9,364.6 720.0,355.0 C717.1,345.4 715.3,337.4 713.7,326.2 C712.1,315.0 710.2,300.1 710.5,287.8 C710.8,275.6 712.4,263.6 715.3,252.7 C718.2,241.8 723.7,231.9 728.0,222.3 C732.3,212.7 737.8,201.6 741.0,195.0 C744.2,188.4 745.5,185.7 747.5,183.0 C749.5,180.3 750.6,179.8 753.0,179.0 C755.4,178.2 757.1,177.7 762.0,178.5 C766.9,179.3 775.8,181.2 782.4,184.0 C789.0,186.8 795.4,189.4 801.5,195.2 C807.6,201.0 812.5,209.7 819.2,219.0 C825.9,228.3 834.0,240.8 841.5,250.9 C849.0,261.0 857.1,271.6 864.0,279.6 C870.9,287.6 877.2,291.9 883.0,298.8 C888.8,305.7 894.5,313.0 899.0,321.0 C903.5,329.0 907.1,338.2 910.0,346.8 C912.9,355.4 915.1,364.1 916.6,372.3 C918.1,380.6 918.5,392.3 918.9,396.3 M864.0,278.3 C865.2,274.9 867.3,265.7 871.0,258.2 C874.7,250.7 880.7,240.7 886.4,233.5 C892.1,226.3 898.3,220.4 905.0,215.0 C911.7,209.6 919.4,204.5 926.6,201.0 C933.8,197.5 942.0,195.6 948.2,194.0 C954.4,192.4 959.0,192.9 963.6,191.7 C968.2,190.5 970.8,188.9 976.0,187.0 C981.2,185.1 989.7,181.5 994.6,180.1 C999.5,178.7 1002.0,178.2 1005.4,178.6 C1008.8,179.0 1012.7,180.1 1014.7,182.5 C1016.8,184.9 1016.9,188.9 1017.7,193.3 C1018.5,197.7 1017.8,204.6 1019.3,208.7 C1020.8,212.8 1025.1,214.4 1027.0,218.0 C1028.9,221.6 1030.2,225.8 1030.9,230.4 C1031.6,235.0 1031.5,238.6 1031.3,245.8 C1031.1,253.0 1030.4,265.9 1030.0,273.6 C1029.6,281.3 1029.3,283.8 1028.7,292.0 C1028.1,300.2 1027.8,312.4 1026.4,322.7 C1025.0,333.0 1023.1,344.4 1020.2,353.6 C1017.3,362.8 1012.4,370.4 1009.0,378.0 C1005.6,385.6 1004.0,390.0 1000.0,399.3 C996.0,408.6 989.0,425.3 985.0,434.0 C981.0,442.7 980.6,444.1 976.3,451.3 C972.0,458.5 964.8,468.6 959.0,477.3 C953.2,486.0 946.8,495.0 941.7,503.3 C936.7,511.6 930.9,523.0 928.7,527.0 M1030.5,245.0 C1030.3,248.9 1030.5,259.5 1029.5,268.6 C1028.5,277.7 1026.9,287.9 1024.8,299.5 C1022.7,311.1 1019.6,325.1 1017.0,338.2 C1014.4,351.3 1010.3,371.4 1009.0,378.0 M1031.0,245.0 C1028.9,246.9 1023.2,250.3 1018.6,256.3 C1014.0,262.3 1007.3,273.0 1003.2,281.0 C999.1,289.0 996.3,297.2 994.0,304.2 C991.7,311.1 990.8,316.6 989.3,322.7 C987.8,328.8 986.1,332.4 985.0,340.8 C983.9,349.2 984.6,360.7 982.8,373.3 C981.0,385.9 978.0,402.2 974.0,416.6 C970.0,431.1 963.7,447.4 959.0,460.0 C954.3,472.6 950.3,483.4 946.0,492.4 C941.7,501.4 936.0,508.7 933.0,514.0 C930.0,519.3 928.8,522.3 928.0,524.0 M986.0,339.0 C982.2,344.0 970.0,358.9 963.3,369.0 C956.6,379.1 950.3,387.8 946.0,399.3 C941.7,410.9 938.8,431.8 937.3,438.3 M822.4,334.0 C823.5,333.2 824.5,329.2 828.8,329.2 C833.1,329.2 840.5,331.1 848.0,334.0 C855.5,336.9 865.5,342.0 873.5,346.8 C881.5,351.6 889.5,356.3 895.9,362.7 C902.3,369.1 907.1,376.5 911.9,385.0 C916.7,393.5 922.0,404.8 924.6,413.9 C927.2,423.0 927.3,435.1 927.8,439.4 M822.4,334.0 C822.4,337.2 821.6,344.5 822.4,353.0 C823.2,361.5 824.3,376.4 827.0,385.0 C829.7,393.6 833.9,396.3 838.4,404.3 C842.9,412.3 849.5,423.7 854.3,433.0 C859.1,442.3 862.2,451.8 867.0,460.0 C871.8,468.2 877.1,474.9 883.0,482.4 C888.9,489.8 897.0,499.6 902.3,504.7 C907.6,509.8 912.9,511.4 915.0,512.7 M976.3,451.8 C980.0,448.1 989.1,436.5 998.6,429.5 C1008.1,422.5 1021.1,415.1 1033.0,409.7 C1044.9,404.3 1058.4,400.3 1070.0,397.3 C1081.6,394.3 1093.1,391.9 1102.6,391.9 C1112.1,391.9 1119.6,393.5 1127.0,397.3 C1134.4,401.1 1139.7,407.5 1147.0,414.7 C1154.3,421.9 1167.7,434.4 1170.6,440.6 C1173.5,446.8 1168.4,448.3 1164.5,451.8 C1160.6,455.3 1154.4,458.4 1147.0,461.7 C1139.6,465.0 1129.0,467.5 1120.0,471.6 C1111.0,475.7 1101.0,480.2 1092.7,486.4 C1084.4,492.6 1077.9,500.0 1070.4,508.7 C1063.0,517.4 1053.4,531.0 1048.0,538.4 C1042.6,545.8 1042.9,545.9 1038.0,553.3 C1033.1,560.7 1025.4,574.4 1018.4,583.0 C1011.4,591.6 1005.1,599.4 996.0,605.2 C986.9,611.0 975.1,616.0 964.0,617.6 C952.9,619.2 939.2,617.6 929.3,615.1 C919.4,612.6 912.8,608.1 904.6,602.8 C896.4,597.4 884.1,586.3 880.0,583.0 M581.0,550.0 C575.2,552.6 557.2,560.0 546.0,565.5 C534.8,571.0 523.1,577.1 514.0,583.0 C504.9,588.9 498.4,594.5 491.5,600.6 C484.6,606.7 476.6,614.5 472.4,619.8 C468.1,625.1 467.1,627.8 466.0,632.6 C464.9,637.4 464.4,644.4 466.0,648.6 C467.6,652.8 468.7,654.3 475.6,658.0 C482.5,661.7 495.8,667.2 507.5,671.0 C519.2,674.8 534.2,678.9 546.0,680.5 C557.8,682.1 567.3,679.4 578.0,680.5 C588.7,681.6 598.3,684.3 610.0,687.0 C621.7,689.7 633.2,694.4 648.0,696.5 C662.8,698.6 684.6,700.0 699.0,699.7 C713.4,699.5 728.5,695.8 734.4,695.0 M622.6,560.7 C619.4,563.1 608.7,569.5 603.4,575.0 C598.1,580.5 593.0,588.2 590.6,594.0 C588.2,599.8 587.9,605.7 589.0,610.0 C590.1,614.3 590.3,617.3 597.0,620.0 C603.7,622.7 616.2,623.7 629.0,626.0 C641.8,628.3 657.7,630.8 673.7,634.0 C689.7,637.2 710.9,642.2 724.8,645.0 C738.6,647.8 744.0,650.2 756.8,651.0 C769.6,651.8 789.0,651.2 801.5,650.0 C814.0,648.8 823.2,647.2 832.0,643.8 C840.8,640.4 848.5,635.5 854.3,629.4 C860.1,623.3 864.6,613.9 867.0,607.0 C869.4,600.1 868.4,591.0 868.7,587.8 M750.4,651.8 C748.8,655.5 743.2,667.1 740.8,674.0 C738.4,680.9 736.5,687.5 736.0,693.3 C735.5,699.1 735.2,705.3 737.6,709.0 C740.0,712.7 745.1,713.8 750.4,715.7 C755.7,717.6 761.1,717.3 769.6,720.5 C778.1,723.7 791.1,730.5 801.5,734.8 C811.9,739.0 821.6,742.4 832.0,746.0 C842.4,749.6 855.0,754.7 864.0,756.6 C873.0,758.5 875.7,758.4 886.3,757.2 C896.9,756.0 914.5,752.9 927.8,749.2 C941.1,745.5 954.3,739.8 966.0,734.8 C977.7,729.8 988.9,724.2 998.0,718.9 C1007.1,713.6 1010.9,709.3 1020.5,702.9 C1030.1,696.5 1047.0,688.5 1055.7,680.5 C1064.5,672.5 1069.5,663.5 1073.0,655.0 C1076.5,646.5 1077.2,638.5 1076.4,629.4 C1075.7,620.3 1072.5,609.2 1068.5,600.6 C1064.5,592.0 1057.3,586.0 1052.5,578.0 C1047.7,570.0 1041.8,556.9 1039.7,552.7 M1020.5,702.9 C1013.6,704.0 991.2,707.2 979.0,709.3 C966.8,711.4 955.0,713.3 947.0,715.7 C939.0,718.1 936.9,719.7 931.0,723.7 C925.1,727.7 918.8,734.6 911.9,739.6 C905.0,744.6 893.8,751.1 889.5,754.0 C885.2,756.9 886.8,756.7 886.3,757.2 M866.0,460.4 C864.0,459.2 859.5,454.7 853.7,453.0 C847.9,451.3 837.9,450.0 831.0,450.0 C824.1,450.0 818.3,450.9 812.5,453.0 C806.7,455.1 801.2,458.4 796.0,462.4 C790.8,466.4 784.8,471.0 781.5,476.9 C778.2,482.8 777.1,490.6 776.4,497.5 C775.7,504.4 775.8,511.1 777.4,518.0 C779.0,524.9 782.3,533.2 785.7,538.7 C789.1,544.2 792.9,547.6 798.0,551.0 C803.1,554.4 810.1,558.2 816.6,559.3 C823.1,560.3 830.3,560.0 837.2,557.3 C844.1,554.5 851.6,548.3 857.8,542.8 C864.0,537.3 869.5,531.2 874.3,524.3 C879.1,517.4 884.6,505.4 886.7,501.6" stroke="#6e7690" stroke-width="6" fill="none"/><path d="M802.0,441.6 C797.0,439.5 789.3,431.2 793.7,429.1 C797.3,425.8 802.0,436.2 802.0,441.6 M813.4,439.6 C809.3,437.1 803.8,428.7 807.9,427.5 C811.5,425.2 814.2,434.9 813.4,439.6 M826.8,436.5 C823.9,432.1 822.1,421.1 826.8,421.8 C831.5,421.1 829.7,432.1 826.8,436.5 M825.7,444.7 C821.3,444.2 813.3,439.4 816.3,436.8 C818.4,433.4 824.5,440.4 825.7,444.7 M805.0,454.0 C799.6,453.6 789.6,448.1 793.2,444.8 C795.6,440.5 803.3,448.9 805.0,454.0 M789.6,449.9 C784.2,450.4 773.5,446.5 776.4,442.7 C778.1,438.1 787.1,445.1 789.6,449.9 M786.5,468.5 C782.1,465.4 776.4,455.5 781.2,454.5 C785.4,452.1 787.7,463.2 786.5,468.5 M778.3,471.5 C772.9,471.3 762.7,466.1 766.2,462.7 C768.4,458.3 776.4,466.4 778.3,471.5 M766.0,476.7 C761.3,479.3 749.9,480.2 751.0,475.5 C750.7,470.6 761.8,473.3 766.0,476.7 M778.3,477.7 C774.5,478.9 766.2,478.0 767.7,474.8 C768.1,471.3 775.7,474.7 778.3,477.7 M774.2,494.2 C768.9,495.0 757.9,491.9 760.6,487.9 C761.9,483.2 771.4,489.6 774.2,494.2 M761.8,498.4 C757.3,501.4 746.0,503.2 746.8,498.4 C746.0,493.6 757.3,495.4 761.8,498.4 M774.2,502.5 C771.0,506.4 761.4,511.0 760.8,506.5 C758.9,502.4 769.4,501.0 774.2,502.5 M777.0,519.3 C773.6,523.5 763.3,528.5 762.6,523.7 C760.5,519.3 771.8,517.7 777.0,519.3 M767.9,531.7 C764.0,535.4 753.2,539.1 753.1,534.2 C751.6,529.6 763.0,529.5 767.9,531.7 M780.4,535.0 C777.3,539.1 767.7,544.1 766.9,539.5 C764.7,535.5 775.4,533.7 780.4,535.0 M772.4,545.4 C769.3,549.8 759.5,555.6 758.4,550.8 C756.0,546.6 767.1,544.2 772.4,545.4 M772.4,554.4 C769.5,559.0 760.0,565.2 758.7,560.5 C756.1,556.4 767.1,553.5 772.4,554.4 M782.6,549.9 C782.1,555.3 776.5,565.2 773.2,561.6 C769.0,559.2 777.4,551.5 782.6,549.9 M794.0,547.6 C793.5,551.7 789.0,559.3 786.6,556.4 C783.4,554.5 790.0,548.8 794.0,547.6 M778.0,565.8 C776.7,571.1 769.6,580.0 767.0,575.9 C763.2,572.9 772.7,566.6 778.0,565.8 M798.5,570.3 C800.5,575.3 800.1,586.7 795.5,585.0 C790.7,584.8 794.7,574.1 798.5,570.3 M787.0,570.3 C789.8,574.9 791.2,586.2 786.4,585.3 C781.6,585.9 783.8,574.7 787.0,570.3 M814.4,577.0 C816.6,582.0 816.4,593.3 811.8,591.8 C807.0,591.7 810.7,580.9 814.4,577.0 M805.3,556.7 C805.9,561.4 802.9,571.0 799.4,568.5 C795.4,567.2 801.2,559.1 805.3,556.7 M825.7,588.4 C828.3,593.1 829.2,604.5 824.5,603.4 C819.6,603.7 822.3,592.6 825.7,588.4 M818.9,563.5 C820.9,568.5 820.5,579.9 815.9,578.2 C811.1,578.0 815.1,567.3 818.9,563.5 M833.7,551.9 C836.2,556.7 836.8,568.1 832.1,566.8 C827.3,567.1 830.2,556.1 833.7,551.9 M832.4,569.0 C837.3,571.2 844.8,579.9 840.3,581.7 C836.6,584.9 832.2,574.4 832.4,569.0 M839.9,586.5 C843.4,589.7 847.3,599.0 843.0,599.4 C839.1,601.0 838.3,591.0 839.9,586.5 M848.5,554.4 C851.7,557.1 855.5,565.1 851.8,565.6 C848.3,567.2 847.2,558.4 848.5,554.4 M858.4,576.6 C863.6,580.3 868.1,590.9 860.9,591.4 C853.9,593.3 854.7,581.8 858.4,576.6 M862.1,555.6 C868.0,558.0 874.8,567.3 867.9,569.4 C861.5,572.9 859.7,561.5 862.1,555.6 M874.5,570.4 C880.3,572.3 887.5,580.8 881.0,583.3 C875.1,587.0 872.6,576.2 874.5,570.4 M868.3,543.2 C874.3,545.4 881.4,554.5 874.5,556.8 C868.3,560.5 866.1,549.2 868.3,543.2 M884.4,558.0 C889.7,557.6 898.4,562.0 894.0,566.2 C890.6,571.2 884.8,563.3 884.4,558.0 M889.4,544.5 C894.4,543.5 903.1,546.7 899.4,551.1 C896.7,556.3 890.4,549.5 889.4,544.5 M873.3,524.7 C878.4,524.7 886.3,529.4 881.9,533.1 C878.2,537.6 873.3,529.8 873.3,524.7 M891.8,529.6 C896.8,528.6 905.5,531.8 901.8,536.3 C899.1,541.4 892.8,534.6 891.8,529.6 M885.6,514.8 C890.4,512.8 899.8,514.4 896.9,519.6 C895.2,525.3 887.6,519.6 885.6,514.8 M904.2,516.0 C909.5,515.5 918.2,519.8 913.8,524.1 C910.4,529.1 904.7,521.3 904.2,516.0 M901.7,511.0 C905.9,508.1 915.1,507.5 913.5,513.0 C913.1,518.8 904.6,515.2 901.7,511.0 M840.0,442.0 C836.5,439.3 832.2,431.0 836.1,430.3 C839.6,428.5 841.2,437.7 840.0,442.0 M850.0,445.0 C845.7,442.3 841.6,433.9 847.4,433.3 C852.9,431.5 852.7,440.7 850.0,445.0" stroke="#6e7690" stroke-width="3.5" fill="none"/></g></svg>
<div class="a" style="left:1686px;top:196px;width:79px;height:12px;border:1px solid #8a8a8a;background:linear-gradient(173deg,#555 45%,#2c2c2c 45%)"></div>
<div class="a" style="left:1686px;top:216px;width:79px;height:12px;border:1px solid #8a8a8a;background:radial-gradient(ellipse 60% 90% at 50% 0%,#555 60%,#2c2c2c 61%)"></div>
<div class="a" style="left:1724px;top:192px;width:4px;height:18px;background:#5a5a5a;border:1px solid #999"></div>
<div class="a" style="left:1722px;top:212px;width:4px;height:18px;background:#5a5a5a;border:1px solid #999"></div>
<div class="t" style="right:102px;top:196px;font-size:11.5px;color:#e6e6e6">66.7</div>
<div class="t" style="right:102px;top:216px;font-size:11.5px;color:#e6e6e6">0.0</div>
<svg style="left:0;top:0" width="1" height="1"><g stroke="#c8c8c8" stroke-width="1.1" fill="none">
<circle cx="1821.5" cy="202" r="6.5"/><path d="M1818,202h7"/><circle cx="1841.5" cy="202" r="6.5"/><path d="M1838,202h7M1841.5,198.5v7"/><circle cx="1861.5" cy="202" r="6.5"/>
<path d="M1873.5,197v11M1873.5,217v11" stroke="#777"/>
<rect x="1879" y="196" width="7" height="7"/><rect x="1882" y="199" width="7" height="7"/><rect x="1899.5" y="196.5" width="10" height="10" rx="1"/><path d="M1902,199l5,5"/>
<path d="M1826,221a5,5 0 1 0 -1,6M1837,221a5,5 0 1 1 1,6"/><circle cx="1861.5" cy="222" r="6"/>
<path d="M1880,217l5,4l-5,4zM1892,217l-5,4l5,4z"/><path d="M1897,222h15M1900,215h10l-5,5zM1900,229h10l-5,-5z"/>
</g><g fill="#c8c8c8"><rect x="1858" y="198.5" width="7" height="7" rx="1"/><circle cx="1861.5" cy="222" r="2"/></g></svg>

<!-- ===== layer property ===== -->
<div class="a" style="left:1700px;top:238px;width:95px;height:13px;background:#4a4a4a"></div>
<div class="a" style="left:1796px;top:238px;width:29px;height:13px;background:#454545"></div>
<div class="a" style="left:1826px;top:238px;width:29px;height:13px;background:#454545"></div>
<div class="a" style="left:1681px;top:251px;width:231px;height:5px;background:#4a4a4a"></div>
<div class="t" style="left:1728px;top:241px;font-size:9.8px;color:#d8d8d8">Layer Property</div>
<svg style="left:0;top:0" width="1" height="1"><g stroke="#b8b8b8" stroke-width="1" fill="none"><path d="M1708,245l6,-4l6,4l-6,4zM1708,248l6,4l6,-4M1708,251l6,4"/><circle cx="1719" cy="251" r="1.3"/><circle cx="1722" cy="254" r="1.3"/></g>
<g stroke="#777" stroke-width="1.1" fill="none"><path d="M1805,249a6,5 0 0 1 12,0M1836,249a5,5 0 0 1 10,-3"/></g></svg>
<div class="a" style="left:1902px;top:256px;width:10px;height:193px;background:#404040"></div>
<div class="a" style="left:1686px;top:265px;width:4px;height:1px;background:#777"></div>
<div class="t" style="left:1691px;top:260px;font-size:11.3px;color:#e8e8e8">Effect</div>
<div class="a" style="left:1724px;top:265px;width:174px;height:1px;background:#6a6a6a"></div>
<div class="a" style="left:1819px;top:273px;width:80px;height:20px;border:1px solid #777;border-radius:2px;background:#4c4c4c"></div>
<svg style="left:0;top:0" width="1" height="1"><g stroke="#c8c8c8" stroke-width="1.1" fill="none"><circle cx="1829.5" cy="283" r="6"/><path d="M1889,280l2.5,-2.5l2.5,2.5M1889,286l2.5,2.5l2.5,-2.5"/><rect x="1870" y="278" width="8" height="8" rx="1.5" fill="#888"/><rect x="1873" y="281" width="8" height="8" rx="1.5"/></g>
<g fill="#c8c8c8"><rect x="1848" y="278" width="2" height="2"/><rect x="1852" y="278" width="2" height="2"/><rect x="1856" y="278" width="2" height="2"/><rect x="1850" y="281" width="2" height="2"/><rect x="1854" y="281" width="2" height="2"/><rect x="1848" y="284" width="2" height="2"/><rect x="1852" y="284" width="2" height="2"/><rect x="1856" y="284" width="2" height="2"/><rect x="1850" y="287" width="2" height="2"/><rect x="1854" y="287" width="2" height="2"/></g></svg>
<div class="a" style="left:1686px;top:302px;width:4px;height:1px;background:#777"></div>
<div class="t" style="left:1691px;top:297px;font-size:11.5px;color:#e8e8e8">Expression color</div>
<div class="a" style="left:1779px;top:302px;width:119px;height:1px;background:#6a6a6a"></div>
<div class="a" style="left:1698px;top:313px;width:149px;height:20px;border:1px solid #777;border-radius:2px;background:#545454"></div>
<svg style="left:0;top:0" width="1" height="1"><circle cx="1749" cy="319.5" r="3.5" fill="#d9534f"/><circle cx="1746.5" cy="324" r="3.5" fill="#4cc04c"/><circle cx="1752" cy="324" r="3.5" fill="#4a90e2"/>
<g stroke="#c8c8c8" stroke-width="1.1" fill="none"><path d="M1835,320l3,-3l3,3M1835,326l3,3l3,-3"/></g></svg>
<div class="t" style="left:1762px;top:317px;font-size:11.5px;color:#e8e8e8">Color</div>

<!-- ===== layer panel ===== -->
<div class="a" style="left:1700px;top:455px;width:56px;height:13px;background:#4a4a4a"></div>
<div class="a" style="left:1757px;top:455px;width:64px;height:13px;background:#454545"></div>
<div class="a" style="left:1822px;top:455px;width:84px;height:13px;background:#454545"></div>
<div class="a" style="left:1700px;top:457px;width:206px;height:11px;overflow:hidden">
<div class="t" style="left:28px;top:1px;font-size:10.4px;color:#d8d8d8">Layer</div>
<div class="t" style="left:86px;top:1px;font-size:10.4px;color:#7c7c7c">History</div>
<div class="t" style="left:151px;top:1px;font-size:10.4px;color:#7c7c7c">Auto Action</div>
</div>
<svg style="left:0;top:0" width="1" height="1"><g stroke="#b8b8b8" stroke-width="1" fill="none"><path d="M1708,460l6,-3l6,3l-6,3zM1708,463l6,3l6,-3M1708,466l6,3l6,-3"/></g>
<g stroke="#777" stroke-width="1" fill="none"><path d="M1768,462h6a3,3 0 0 1 0,6h-6M1768,462l2,-2M1768,462l2,2M1834,468v-8h10l2,-2M1834,462h12"/></g></svg>
<div class="a" style="left:1681px;top:468px;width:231px;height:73px;background:#474747"></div>
<div class="a" style="left:1682px;top:473px;width:39px;height:20px;border:1px solid #777;border-radius:3px;background:#4c4c4c"></div>
<div class="a" style="left:1686px;top:476px;width:15px;height:13px;border:1px solid #999;border-radius:2px"></div>
<div class="a" style="left:1724px;top:473px;width:74px;height:20px;border:1px solid #777;border-radius:3px;background:#555"></div>
<div class="t" style="left:1736px;top:477px;font-size:11.8px;color:#e8e8e8">Normal</div>
<div class="a" style="left:1806px;top:494px;width:35px;height:20px;background:#4b4b4b;border-radius:3px"></div>
<div class="a" style="left:1842px;top:494px;width:33px;height:20px;background:#4b4b4b;border-radius:3px"></div>
<div class="a" style="left:1804px;top:478px;width:70px;height:10px;background:repeating-linear-gradient(90deg,#f0f0f0 0 4px,#c8c8c8 4px 8px);opacity:0.9"></div>
<div class="a" style="left:1873px;top:474px;width:3px;height:19px;background:#888;border-radius:1px"></div>
<div class="t" style="left:1882px;top:477px;font-size:11.5px;color:#e8e8e8">100</div>
<svg style="left:0;top:0" width="1" height="1"><g stroke="#c8c8c8" stroke-width="1.1" fill="none"><path d="M1709,480l3,-3l3,3M1709,486l3,3l3,-3M1787,480l3,-3l3,3M1787,486l3,3l3,-3M1904,480l3,-3l3,3M1904,486l3,3l3,-3"/>
<path d="M1708,503v-6h8v3M1712,509h8v-8h-4" stroke-dasharray="1.5 1"/><path d="M1737,497v14M1733,500l4,-3l4,3M1731,505h12"/><path d="M1754,498v10l3,3M1759,509c2,-2 3,2 5,0"/>
<path d="M1780,499a3,3 0 0 1 6,0v3"/><rect x="1778.5" y="502.5" width="9" height="8" fill="#c8c8c8"/><rect x="1793" y="498" width="4" height="4" fill="#c8c8c8"/><rect x="1799" y="502" width="4" height="4" fill="#c8c8c8"/><rect x="1793" y="505" width="6" height="6" fill="#c8c8c8"/>
<g stroke="#666"><circle cx="1818" cy="504" r="5"/><path d="M1822,508l4,4M1827,508l-4,4M1833,500l3,-3l3,3M1833,507l3,3l3,-3M1843,510l8,-12v12zM1850,508l4,4M1854,508l-4,4M1870,500l3,-3l3,3M1870,507l3,3l3,-3"/></g>
</g>
<rect x="1888" y="497" width="24" height="17" rx="2" fill="#4c4c4c" stroke="#777"/><rect x="1891" y="500" width="8" height="7" fill="#3b8cf0"/><rect x="1895" y="504" width="7" height="6" fill="#fff"/>
<g stroke="#c8c8c8" stroke-width="1.1" fill="none"><rect x="1684.5" y="521.5" width="13" height="11" rx="1"/><path d="M1685,527h12M1687,524h1M1687,530h1"/>
<path d="M1758,530v-9h9v6M1758,530h7"/><circle cx="1769" cy="532" r="2.5"/><rect x="1777.5" y="521.5" width="9" height="9"/><circle cx="1782" cy="526" r="2.5"/><circle cx="1789" cy="532" r="2.5"/>
<path d="M1797,531v-9h4l1,2h6v7z" fill="#c8c8c8"/><circle cx="1808" cy="532" r="2.5"/>
<rect x="1821.5" y="521.5" width="7" height="7"/><rect x="1817.5" y="526.5" width="7" height="7"/><rect x="1841.5" y="521.5" width="7" height="7"/><rect x="1837.5" y="526.5" width="7" height="7"/>
<g stroke="#666"><rect x="1876.5" y="521.5" width="10" height="10"/><circle cx="1884" cy="528" r="3"/></g>
<path d="M1900,523h10M1902,523v10h6v-10"/></g>
<rect x="1859" y="521" width="12" height="12" rx="2" fill="#c8c8c8"/><circle cx="1865" cy="527" r="3.5" fill="#333"/>
</svg>
<!-- layer list -->
<div class="a" style="left:1681px;top:541px;width:21px;height:136px;background:#393939"></div>
<div class="a" style="left:1702px;top:541px;width:18px;height:136px;background:#3e3e3e"></div>
<div class="a" style="left:1701px;top:541px;width:1px;height:136px;background:#2c2c2c"></div>
<div class="a" style="left:1719px;top:541px;width:1px;height:136px;background:#2c2c2c"></div>
<div class="a" style="left:1720px;top:541px;width:182px;height:34px;background:#5e6984"></div>
<div class="a" style="left:1681px;top:575px;width:221px;height:1px;background:#2a2a2a"></div>
<div class="a" style="left:1681px;top:608px;width:221px;height:1px;background:#2a2a2a"></div>
<div class="a" style="left:1681px;top:642px;width:221px;height:1px;background:#2a2a2a"></div>
<div class="a" style="left:1681px;top:676px;width:221px;height:1px;background:#2a2a2a"></div>
<div class="a" style="left:1724px;top:543px;width:37px;height:31px;border:1px solid #cfd6e6;background:#222"></div>
<div class="a" style="left:1726px;top:545px;width:33px;height:27px;background-color:#fff;background-image:linear-gradient(45deg,#ccc 25%,transparent 25%,transparent 75%,#ccc 75%),linear-gradient(45deg,#ccc 25%,transparent 25%,transparent 75%,#ccc 75%);background-size:8px 8px;background-position:0 0,4px 4px"></div>
<div class="a" style="left:1726px;top:579px;width:33px;height:27px;box-shadow:0 0 0 1px #222;background-color:#fff;background-image:linear-gradient(45deg,#ccc 25%,transparent 25%,transparent 75%,#ccc 75%),linear-gradient(45deg,#ccc 25%,transparent 25%,transparent 75%,#ccc 75%);background-size:8px 8px;background-position:0 0,4px 4px"></div>
<div class="a" style="left:1726px;top:613px;width:33px;height:27px;box-shadow:0 0 0 1px #222;background:#fff"></div>
<div class="a" style="left:1726px;top:647px;width:33px;height:27px;box-shadow:0 0 0 1px #222;background:#8a8a8a"></div>
<div class="t" style="left:1768px;top:545px;font-size:11.2px;color:#f0f0f0">100 % Normal</div>
<div class="t" style="left:1768px;top:558px;font-size:11.2px;color:#f0f0f0">Layer 3</div>
<div class="t" style="left:1768px;top:578px;font-size:11.2px;color:#e8e8e8">40 % Normal</div>
<div class="t" style="left:1768px;top:592px;font-size:11.2px;color:#e8e8e8">Layer 1</div>
<div class="t" style="left:1768px;top:612px;font-size:11.2px;color:#e8e8e8">100 % Normal</div>
<div class="t" style="left:1768px;top:626px;font-size:11.2px;color:#e8e8e8">Layer 2</div>
<div class="a" style="left:1772px;top:647px;width:17px;height:17px;background:#fff;border-radius:2px"></div>
<svg style="left:0;top:0" width="1" height="1"><path d="M1776,650h7v10h-4l-3,-3z" stroke="#222" stroke-width="1.1" fill="none"/></svg>
<div class="t" style="left:1793px;top:661px;font-size:11px;color:#e8e8e8">Paper</div>
<svg style="left:0;top:0" width="1" height="1"><g fill="#c8c8c8"><path d="M1684,558c3,-5 11,-5 14,0c-3,5 -11,5 -14,0z"/><path d="M1684,591c3,-5 11,-5 14,0c-3,5 -11,5 -14,0z"/><path d="M1684,625c3,-5 11,-5 14,0c-3,5 -11,5 -14,0z"/><path d="M1684,659c3,-5 11,-5 14,0c-3,5 -11,5 -14,0z"/></g>
<g fill="#393939"><circle cx="1691" cy="558" r="2.6"/><circle cx="1691" cy="591" r="2.6"/><circle cx="1691" cy="625" r="2.6"/><circle cx="1691" cy="659" r="2.6"/></g>
<g stroke="#c8c8c8" stroke-width="1.1" fill="none"><path d="M1704,565l2,-5l7,-7l3,3l-7,7zM1703,567.5h13"/></g>
<g stroke="#333" stroke-width="1" fill="none"><rect x="1705.5" y="585.5" width="9" height="9" rx="2"/><rect x="1705.5" y="619.5" width="9" height="9" rx="2"/><rect x="1705.5" y="653.5" width="9" height="9" rx="2"/></g></svg>
<div class="a" style="left:1902px;top:541px;width:10px;height:420px;background:#404040"></div>

<!-- ===== top strip icons ===== -->
<svg style="left:0;top:0" width="1" height="1"><g stroke="#8a8a8a" stroke-width="1.2" fill="none">
<path d="M3,2l-3,3.5l3,3.5M7.5,2l-3.5,3.5l3.5,3.5"/>
<path d="M29.5,0v12M31.5,0v12M33.5,0v12" stroke-width="0.9"/>
<path d="M44,2l-3,3.5l3,3.5M48.5,2l-3.5,3.5l3.5,3.5"/>
<path d="M72,2l-3,3.5l3,3.5"/>
<path d="M196.5,0v12M198.5,0v12M200.5,0v12" stroke-width="0.9"/>
<path d="M1648,2l-3,3.5l3,3.5"/>
<path d="M1669,2l3,3.5l-3,3.5M1673.5,2l3.5,3.5l-3.5,3.5"/>
<path d="M1684.5,0v12M1686.5,0v12M1688.5,0v12" stroke-width="0.9"/>
<path d="M1881,2l3,3.5l-3,3.5"/>
<path d="M1905,2l3,3.5l-3,3.5M1909.5,2l3.5,3.5l-3.5,3.5"/>
</g></svg>
<!-- main toolbar icons -->
<div class="a" style="left:216px;top:21px;width:1418px;height:1px;background:#2c2c2c"></div>
<svg style="left:0;top:0" width="1" height="1">
<g stroke="#7a7a7a" stroke-width="1"><path d="M240.5,0v21M334.5,0v21M390.5,0v21M494.5,0v21M574.5,0v21M654.5,0v21"/></g>
<g stroke="#c4c4c4" stroke-width="1.2" fill="none">
<rect x="215.5" y="0.5" width="17" height="17" rx="1.5"/>
<path d="M220,12c-2,-3 2,-7 6,-7c3,0 4,2 2,4c-2,2 -5,2 -5,0c0,-1 2,-2 4,-2M229,6c2,3 -2,7 -6,7c-2,0 -3,-1 -2,-2"/>
<path d="M252,0.5v13a2,2 0 0 0 2,2h4M264,0.5v12"/>
<path d="M273,15v-11h5l2,2h3M274,15l3,-8h12l-3,8z"/><path d="M283,4h6l-2,-2M289,4l-2,2" stroke-width="1"/>
<path d="M300.5,5.5h-1.5l-3.5,9v3h18v-3l-3.5,-9h-1.5" stroke-width="1.2"/><path d="M305,0v10M301.5,7l3.5,3.5l3.5,-3.5" stroke-width="1.4"/>
<path d="M320,7l3,-3l3,3M320,11l3,3l3,-3" stroke-width="1.1"/>
<path d="M346,7h8a4,4 0 0 1 0,8h-8" stroke-width="1.4"/>
<path d="M381,7h-8a4,4 0 0 0 0,8h8" stroke="#8a8a8a" stroke-width="1.4"/>
<rect x="471.5" y="3.5" width="13" height="13"/>
<path d="M502.5,2.5h14v14h-14z" stroke="#8a8a8a" stroke-dasharray="2 1.5" stroke-width="1"/><path d="M503,1.5l15,15.5" stroke="#8a8a8a" stroke-width="1"/>
<path d="M526.5,2.5h14v14h-14z M526.5,16.5l14,-14" stroke="#8a8a8a" stroke-dasharray="2 1.5" stroke-width="1"/>
<rect x="550.5" y="1.5" width="15" height="15" rx="2" stroke="#8a8a8a" stroke-width="1"/><rect x="553.5" y="4.5" width="9" height="9" stroke="#8a8a8a" stroke-dasharray="1.5 1" stroke-width="1"/>
<path d="M583,3v13h15z" stroke-width="1.5"/><path d="M591,9l7,-8" stroke-width="2.5"/>
<path d="M606,9h17a8.5,8 0 0 1 -17,0z" stroke-width="1.5"/><path d="M615,9l7,-8" stroke-width="2.5"/>
<path d="M631,16h16M634,5v13M631,9h16M643,5v13" stroke-width="1"/><path d="M634,9v7h12" stroke-width="1.6"/><path d="M639,9l7,-8" stroke-width="2.5"/>
<path d="M670,3a8,7 0 1 1 -6,12l-2,3l1,-4a8,7 0 0 1 7,-11z" stroke-width="1.4"/><path d="M676,0l3,-1v3" stroke-width="1"/>
</g>
<g fill="#c4c4c4">
<circle cx="262" cy="15.5" r="5"/><path d="M259,15.5h6M262,12.5v6" stroke="#505050" stroke-width="1.3"/>
<path d="M343,9l5,-4v8z"/><path d="M384,9l-5,-4v8z" fill="#8a8a8a"/>
<rect x="296" y="14" width="18" height="3"/>
<path d="M445,9 L462,9 L464,12 L455.5,18 L448,11.5 L448,15 Q446,17 445,14 z"/><path d="M446,9 L454.5,1 L463,9" fill="none" stroke="#c4c4c4" stroke-width="1.5"/>
<path d="M542,17h-14l14,-14z" fill="#8a8a8a"/>
<text x="670" y="14" font-size="10" font-family="Liberation Sans" text-anchor="middle" fill="#c4c4c4" font-weight="bold">?</text>
</g>
<g fill="#c4c4c4">
<rect x="405" y="0" width="2" height="4" rx="1"/><rect x="405" y="14" width="2" height="4" rx="1"/>
<rect x="397" y="8" width="4" height="2" rx="1"/><rect x="411" y="8" width="4" height="2" rx="1"/>
<rect x="399" y="2" width="3" height="2" rx="1" transform="rotate(45 400.5 3)"/><rect x="410" y="2" width="3" height="2" rx="1" transform="rotate(-45 411.5 3)"/>
<rect x="399" y="14" width="3" height="2" rx="1" transform="rotate(-45 400.5 15)"/><rect x="410" y="14" width="3" height="2" rx="1" transform="rotate(45 411.5 15)"/>
</g>
<g stroke="#8a8a8a" stroke-width="1" fill="none" stroke-dasharray="2 1.5"><rect x="422.5" y="1.5" width="12" height="12"/><path d="M436,6l3,0M436,11h3M433,15v3M429,15v3"/></g>
<g fill="#c4c4c4"><rect x="470" y="2" width="3" height="3"/><rect x="483" y="2" width="3" height="3"/><rect x="470" y="15" width="3" height="3"/><rect x="483" y="15" width="3" height="3"/><rect x="476.5" y="2" width="3" height="3"/><rect x="476.5" y="15" width="3" height="3"/><rect x="470" y="8.5" width="3" height="3"/><rect x="483" y="8.5" width="3" height="3"/></g>
</svg>
<!-- canvas title -->
<svg style="left:0;top:0" width="1" height="1"><g stroke="#c0c0c0" stroke-width="1.1" fill="none">
<path d="M221,30l8,8M229,30l-8,8"/><path d="M238,38.5h9"/><rect x="256.5" y="29.5" width="9" height="9" rx="0.5"/>
<path d="M1618,53l3.5,3.5l3.5,-3.5" stroke-width="1.3"/>
</g></svg>
<div class="t" style="left:707px;top:28px;font-size:13.6px;color:#b8b8b8;-webkit-text-stroke:0">Illustration* (2500 x 2000px 600dpi 66.7%)&nbsp; - CLIP STUDIO PAINT PRO</div>
<div class="a" style="left:216px;top:47px;width:99px;height:19px;background:#4a4a4a"></div>
<div class="a" style="left:316px;top:47px;width:99px;height:19px;background:#5f6a88"></div>
<div class="a" style="left:416px;top:47px;width:98px;height:19px;background:#4a4a4a"></div>
<svg style="left:0;top:0" width="1" height="1"><g stroke="#a8a8a8" stroke-width="2.2"><path d="M224,52l6,6M230,52l-6,6M424,52l6,6M430,52l-6,6"/></g><circle cx="326.5" cy="55" r="3" fill="#9aa3b8"/></svg>
<div class="t" style="left:235px;top:50px;font-size:10.7px;color:#bcbcbc;width:72px;overflow:hidden">Armor Practice</div>
<div class="t" style="left:335px;top:50px;font-size:10.9px;color:#e2e2e2">Illustration*</div>
<div class="t" style="left:435px;top:50px;font-size:10.7px;color:#bcbcbc;width:74px;overflow:hidden">Screen Shot <span style="color:#999">20</span></div>
<div class="a" style="left:514px;top:65px;width:1115px;height:1px;background:#4a4a4a"></div>
<!-- scrollbars -->
<div class="a" style="left:1617px;top:67px;width:12px;height:12px;background:#555;border-radius:2px"></div>
<div class="a" style="left:1617px;top:940px;width:12px;height:11px;background:#555;border-radius:2px"></div>
<svg style="left:0;top:0" width="1" height="1"><g stroke="#c0c0c0" stroke-width="1.2" fill="none"><path d="M1620,75l3,-3l3,3M1620,944l3,3l3,-3M1610,955l3,3l-3,3"/></g></svg>
<!-- status bar -->
<div class="a" style="left:218px;top:953px;width:50px;height:11px;border:1px solid #888;background:linear-gradient(170deg,#4a4a4a 50%,#2e2e2e 50%)"></div>
<div class="t" style="left:219px;top:953px;font-size:12px;color:#e8e8e8">66.7</div>
<div class="a" style="left:271px;top:953px;width:45px;height:11px;border:1px solid #888;background:linear-gradient(175deg,#4a4a4a 40%,#2e2e2e 40%)"></div>
<div class="a" style="left:378px;top:953px;width:47px;height:11px;border:1px solid #888;background:linear-gradient(170deg,#4a4a4a 50%,#2e2e2e 50%)"></div>
<div class="t" style="left:382px;top:953px;font-size:12px;color:#e8e8e8">0.0</div>
<div class="a" style="left:428px;top:953px;width:47px;height:11px;border:1px solid #888;background:#2e2e2e"></div>
<svg style="left:0;top:0" width="1" height="1"><g stroke="#a0a0a0" stroke-width="1.2" fill="none"><path d="M323,958.5h7M344,958.5h8M348,954.5v8"/><path d="M483,960a5,5 0 0 1 9,-3M504,960a5,5 0 0 0 -9,-3" stroke-width="1.4"/><path d="M482,957l1.5,4l3,-2.5M505,957l-1.5,4l-3,-2.5" fill="#a0a0a0"/><circle cx="527" cy="958" r="4.5"/><path d="M527,955v3"/><path d="M545,955l-3,3l3,3"/></g><rect x="364" y="955" width="6" height="6" fill="#a0a0a0"/></svg>
<div class="a" style="left:540px;top:953px;width:10px;height:11px;background:#4a4a4a"></div>
<div class="a" style="left:848px;top:953px;width:390px;height:10px;border-radius:5px;background:#565656"></div>

<!-- ===== tool property panel ===== -->
<div class="a" style="left:40px;top:453px;width:165px;height:5px;background:#505050"></div>
<div class="a" style="left:175px;top:440px;width:29px;height:13px;background:#4e4e4e"></div>
<svg style="left:0;top:0" width="1" height="1"><g stroke="#9a9a9a" stroke-width="1"><path d="M44,443.5h8M44,446h8M44,448.5h8"/></g>
<g fill="#bdbdbd"><path d="M66,456 l1.5,-4 L76,442.5 l2.5,2.5 L70,454 Z"/></g><g stroke="#c0c0c0" stroke-width="1.1" fill="none"><circle cx="79" cy="453" r="2.6"/><path d="M79,448.5v1.5M79,456v1.5M74.5,453h1.5M82,453h1.5M76,450l1,1M81,455l1,1M82,450l-1,1M76,456l1,-1"/></g>
<g stroke="#8a8a8a" stroke-width="2.6" fill="none" stroke-linecap="round"><path d="M186,453 l9,-9"/></g><g stroke="#8a8a8a" stroke-width="1" fill="none"><path d="M191,453a4,3 0 0 1 8,0M193,453a2,1.5 0 0 1 4,0"/></g></svg>
<div class="t" style="left:86px;top:444px;font-size:10.3px;color:#cfcfcf;width:88px;overflow:hidden;-webkit-text-stroke:0">Tool property <span style="color:#bbb">[G-pe</span></div>
<div class="a" style="left:40px;top:460px;width:82px;height:38px;background:#bdbdbd"></div>
<div class="a" style="left:122px;top:460px;width:83px;height:38px;background:#545454"></div>
<div class="a" style="left:41px;top:461px;width:38px;height:15px;background:#8d8d8d;border-radius:2px"></div>
<div class="t" style="left:41px;top:462px;font-size:11.3px;color:#e6e6e6">G-pen</div>
<svg style="left:0;top:0" width="1" height="1">
<path d="M55.0,486.2 L56.7,485.8 L58.3,485.3 L60.0,484.8 L61.7,484.1 L63.3,483.4 L65.0,482.6 L66.7,481.7 L68.4,480.9 L70.0,480.0 L71.7,479.1 L73.4,478.2 L75.0,477.3 L76.7,476.4 L78.3,475.5 L80.0,474.8 L81.6,474.0 L83.2,473.4 L84.8,472.8 L86.4,472.3 L88.0,471.9 L89.6,471.5 L91.2,471.3 L92.8,471.2 L94.3,471.2 L95.9,471.3 L97.5,471.4 L99.0,471.7 L100.6,472.1 L102.1,472.6 L103.7,473.1 L105.3,473.7 L106.9,474.4 L108.5,475.2 L110.1,476.1 L111.7,476.9 L113.3,477.8 L114.9,478.8 L116.5,479.7 L118.2,480.7 L119.8,481.6 L121.5,482.6 L123.1,483.4 L124.8,484.3 L126.5,485.1 L128.1,485.8 L129.8,486.4 L131.5,487.0 L133.2,487.5 L135.0,487.8 L136.7,488.1 L138.4,488.2 L140.1,488.3 L141.8,488.2 L143.5,488.0 L145.3,487.7 L147.0,487.3 L148.7,486.8 L150.3,486.2 L152.0,485.5 L153.7,484.7 L155.3,483.9 L157.0,483.0 L158.6,482.1 L160.2,481.1 L161.9,480.2 L163.5,479.2 L165.1,478.2 L166.7,477.2 L168.3,476.2 L169.9,475.3 L171.5,474.5 L173.1,473.6 L174.7,472.9 L176.3,472.2 L177.9,471.6 L179.5,471.1 L181.1,470.7 L182.8,470.4 L184.4,470.2 L186.0,470.0 L186.0,470.0 L184.4,469.9 L182.7,470.0 L181.0,470.2 L179.4,470.5 L177.7,470.9 L176.0,471.4 L174.3,472.0 L172.7,472.7 L171.0,473.4 L169.3,474.2 L167.6,475.0 L166.0,475.9 L164.3,476.8 L162.7,477.7 L161.0,478.6 L159.4,479.5 L157.7,480.4 L156.1,481.3 L154.4,482.1 L152.8,482.8 L151.2,483.5 L149.6,484.1 L148.0,484.6 L146.4,485.0 L144.9,485.3 L143.3,485.6 L141.7,485.7 L140.2,485.7 L138.6,485.7 L137.1,485.5 L135.5,485.2 L134.0,484.9 L132.4,484.4 L130.8,483.9 L129.2,483.3 L127.6,482.6 L126.0,481.8 L124.4,481.0 L122.8,480.1 L121.2,479.2 L119.6,478.3 L117.9,477.3 L116.3,476.4 L114.6,475.4 L113.0,474.5 L111.3,473.6 L109.6,472.8 L107.9,472.0 L106.2,471.3 L104.5,470.6 L102.8,470.1 L101.1,469.6 L99.4,469.2 L97.7,469.0 L96.0,468.8 L94.3,468.8 L92.6,468.9 L90.8,469.1 L89.2,469.4 L87.5,469.8 L85.8,470.3 L84.1,470.9 L82.5,471.6 L80.8,472.4 L79.2,473.2 L77.5,474.1 L75.9,475.0 L74.3,476.0 L72.7,476.9 L71.0,477.9 L69.4,478.9 L67.8,479.9 L66.2,480.9 L64.6,481.8 L63.0,482.7 L61.4,483.5 L59.8,484.3 L58.2,485.0 L56.6,485.6 L55.0,486.2Z" fill="#111"/>
<g stroke="#d0d0d0" stroke-width="1.2" fill="none"><path d="M187.5,487v-3a3,3 0 0 1 6,0"/></g><rect x="189" y="487" width="8" height="6" rx="1" fill="#d0d0d0"/>
</svg>
<div class="a" style="left:191px;top:498px;width:14px;height:215px;background:#434343"></div>
<div class="t" style="left:56px;top:503px;font-size:11.5px;color:#e4e4e4">Brush Size</div>
<div class="a" style="left:77px;top:516px;width:39px;height:7px;border-bottom:1px solid #777;border-right:1px solid #777"></div>
<div class="a" style="left:77px;top:516px;width:13px;height:6px;background:#5a5a5a;border:1px solid #777"></div>
<div class="t" style="right:1753px;top:509px;font-size:11.5px;color:#e4e4e4">3.9</div>
<div class="a" style="left:174px;top:502px;width:14px;height:24px;border:1px solid #666;border-radius:2px"></div>
<div class="a" style="left:50px;top:531px;width:138px;height:1px;background:#5c5c5c"></div>
<div class="t" style="left:56px;top:538px;font-size:11.5px;color:#e4e4e4">Opacity</div>
<div class="a" style="left:77px;top:551px;width:39px;height:8px;background:#555;border:1px solid #777"></div>
<div class="t" style="right:1752px;top:544px;font-size:11.5px;color:#e4e4e4">100</div>
<div class="a" style="left:174px;top:537px;width:14px;height:24px;border:1px solid #666;border-radius:2px"></div>
<div class="a" style="left:50px;top:566px;width:138px;height:1px;background:#5c5c5c"></div>
<div class="t" style="left:56px;top:578px;font-size:10px;color:#cfcfcf;letter-spacing:-0.5px;width:38px;overflow:hidden">Anti-aliasing</div>
<div class="a" style="left:99px;top:572px;width:90px;height:23px;border:1px solid #666;border-radius:3px;background:#4a4a4a"></div>
<div class="a" style="left:135px;top:573px;width:22px;height:21px;background:#6b7eb3"></div>
<div class="a" style="left:50px;top:601px;width:138px;height:1px;background:#5c5c5c"></div>
<div class="t" style="left:56px;top:608px;font-size:11.5px;color:#e4e4e4">Stabilization</div>
<div class="a" style="left:77px;top:621px;width:39px;height:7px;border-bottom:1px solid #777;border-right:1px solid #777"></div>
<div class="a" style="left:77px;top:621px;width:20px;height:6px;background:#5a5a5a;border:1px solid #777"></div>
<div class="t" style="right:1753px;top:614px;font-size:11.5px;color:#e4e4e4">6</div>
<div class="a" style="left:44px;top:639px;width:10px;height:10px;border:1px solid #999;border-radius:2px"></div>
<div class="a" style="left:56px;top:638px;width:14px;height:14px;border:1px solid #888;border-radius:2px;background:#4e4e4e"></div>
<div class="t" style="left:74px;top:638px;font-size:11.5px;color:#e8e8e8">Adjust by speed</div>
<div class="a" style="left:50px;top:659px;width:138px;height:1px;background:#5c5c5c"></div>
<div class="a" style="left:56px;top:668px;width:14px;height:14px;border-radius:2px;background:#4b4b4b"></div>
<div class="t" style="left:74px;top:669px;font-size:10px;color:#7a7a7a;letter-spacing:-0.4px;width:50px;overflow:hidden">Vector magnet</div>
<div class="a" style="left:128px;top:666px;width:45px;height:18px;background:repeating-linear-gradient(90deg,#3a3a3a 0 1px,#444 1px 8px,#3a3a3a 8px 9px);border:1px solid #3a3a3a"></div>
<div class="a" style="left:175px;top:666px;width:14px;height:18px;background:#4a4a4a;border-radius:2px"></div>
<svg style="left:0;top:0" width="1" height="1"><g stroke="#c8c8c8" stroke-width="1.1" fill="none">
<path d="M163,512l3,-3l3,3M163,517l3,3l3,-3"/><path d="M177,507l4,4l4,-4M177,512l4,4l4,-4"/>
<path d="M163,547l3,-3l3,3M163,552l3,3l3,-3"/><rect x="177.5" y="544.5" width="8" height="8" rx="1"/><path d="M178,552l7,-7"/>
<path d="M163,617l3,-3l3,3M163,622l3,3l3,-3"/>
<path d="M181,580l3,-3l3,3M181,586l3,3l3,-3"/>
<path d="M46,644h6M49,641v6"/><path d="M58,645l3,3l7,-8" stroke-width="1.5"/>
<path d="M180,671l3,4l-3,4" stroke="#777"/>
</g>
<g fill="#d8d8d8"><path d="M103,581h3v-3h4v3h3v4h-3v3h-4v-3h-3z"/><circle cx="125" cy="583.5" r="6.5"/><circle cx="146" cy="583.5" r="6.5" fill="#b8c4e0"/><circle cx="146" cy="583.5" r="4" fill="#d0d0d0"/><circle cx="166" cy="583.5" r="6.5" fill="#8a8a8a"/><circle cx="166" cy="583.5" r="4" fill="#d4d4d4"/></g>
<g stroke="#c0c0c0" stroke-width="1.2" fill="none"><circle cx="175" cy="723" r="6"/><path d="M175,717v6"/><path d="M189,718a4,4 0 1 0 5,5l6,6l2,-2l-6,-6a4,4 0 0 0 -5,-5l3,3l-2,2z"/></g>
</svg>

<!-- ===== color panel ===== -->
<svg style="left:0;top:0" width="1" height="1"><g stroke="#9a9a9a" stroke-width="1"><path d="M44,744.5h8M44,747h8M44,749.5h8"/></g></svg>
<div class="a" style="left:58px;top:739px;width:29px;height:13px;background:#4a4a4a"></div>
<div class="a" style="left:87px;top:739px;width:29px;height:13px;background:#444;border-left:1px solid #3a3a3a"></div>
<div class="a" style="left:117px;top:739px;width:29px;height:13px;background:#444;border-left:1px solid #3a3a3a"></div>
<div class="a" style="left:147px;top:739px;width:29px;height:13px;background:#444;border-left:1px solid #3a3a3a"></div>
<div class="a" style="left:177px;top:739px;width:28px;height:13px;background:#444;border-left:1px solid #3a3a3a"></div>
<div class="a" style="left:194px;top:738px;width:11px;height:13px;background:#5a5a5a;border:1px solid #888;border-radius:2px"></div>
<svg style="left:0;top:0" width="1" height="1"><g stroke="#b8b8b8" stroke-width="1.1" fill="none">
<circle cx="72" cy="749" r="6"/><path d="M196.5,743l2.5,2.5l2.5,-2.5"/>
<path d="M94,743h14M94,749h14M97,741v4M104,747v4" stroke="#999"/>
<rect x="124" y="741" width="14" height="10" stroke="#999"/><rect x="154" y="741" width="5" height="5" stroke="#999"/><rect x="162" y="741" width="5" height="5" stroke="#999"/><path d="M156,746v5h8v-5" stroke="#999"/>
</g><rect x="72" y="746" width="4" height="4" rx="0.5" fill="#b8b8b8" transform="translate(-2,1)"/></svg>
<div class="a" style="left:39.7px;top:771.6px;width:163px;height:163px;border-radius:50%;background:conic-gradient(from 0deg,#ffff00 0deg,#00ff00 60deg,#00ffff 120deg,#0000ff 180deg,#ff00ff 240deg,#ff0000 300deg,#ffff00 360deg);filter:saturate(0.92)"></div>
<div class="a" style="left:53.5px;top:785.4px;width:135.4px;height:135.4px;border-radius:50%;background:#4a4a4a"></div>
<div class="a" style="left:78.5px;top:809.5px;width:86.6px;height:86.6px;background:linear-gradient(to bottom,rgba(0,0,0,0),#000),linear-gradient(to right,#fff,#f00)"></div>
<div class="a" style="left:50px;top:812px;width:12px;height:8px;border:1.5px solid #fff;outline:1px solid #222;background:#e0001a;transform:rotate(35deg)"></div>
<div class="a" style="left:74px;top:891.5px;width:9px;height:9px;border-radius:50%;border:1.3px solid #ddd"></div>
<div class="a" style="left:51px;top:932px;width:16px;height:15px;border:1px solid #666;border-radius:2px;background:#4a4a4a"></div>
<div class="a" style="left:54px;top:934px;width:10px;height:10px;background:#fff"></div>
<div class="a" style="left:40px;top:922px;width:17px;height:17px;border:2px solid #8499c8;border-radius:3px;background:#000"></div>
<div class="a" style="left:40px;top:950px;width:28px;height:10px;border:1px solid #6a6a6a;border-radius:5px"></div>
<div class="a" style="left:43px;top:953px;width:22px;height:4px;background:repeating-linear-gradient(90deg,#ddd 0 4px,#555 4px 6px)"></div>
<div class="a" style="left:82px;top:949px;width:8px;height:9px;border:1px solid #aaa;border-radius:1px;font-size:7px;line-height:7px;text-align:center;color:#ccc">H</div>
<div class="t" style="left:91px;top:948px;font-size:11.5px;color:#d8d8d8">358</div>
<div class="a" style="left:114px;top:949px;width:8px;height:9px;border:1px solid #aaa;border-radius:1px;font-size:7px;line-height:7px;text-align:center;color:#ccc">S</div>
<div class="t" style="left:133px;top:948px;font-size:11.5px;color:#d8d8d8">0</div>
<div class="a" style="left:146px;top:949px;width:8px;height:9px;background:#999;border-radius:1px;font-size:7px;line-height:9px;text-align:center;color:#333">V</div>
<div class="t" style="left:165px;top:948px;font-size:11.5px;color:#d8d8d8">0</div>
<svg style="left:0;top:0" width="1" height="1"><g stroke="#b8b8b8" stroke-width="1.2" fill="none"><circle cx="192" cy="951.5" r="6.5"/><path d="M190,947.5v8l6,-4z"/></g></svg>

<!-- ===== sub tool panel content ===== -->
<div class="a" style="left:40px;top:34px;width:165px;height:4px;background:#505050"></div><div class="a" style="left:40px;top:38px;width:165px;height:2px;background:#383838"></div>
<svg style="left:0;top:0" width="1" height="1"><g stroke="#9a9a9a" stroke-width="1"><path d="M44,24.5h8M44,27h8M44,29.5h8"/></g>
<g fill="#c0c0c0"><path d="M66,36 l1.5,-4 L77,22.5 l2.5,2.5 L70,34 Z"/></g><g stroke="#c0c0c0" stroke-width="1.2" fill="none"><path d="M74,31h8M74,34h8M74,37h8M75,30v8M81,30v8"/></g></svg>
<div class="t" style="left:86px;top:24px;font-size:9.9px;color:#d4d4d4;-webkit-text-stroke:0">Sub Tool [Pen]</div>
<div class="a" style="left:41px;top:41px;width:79px;height:23px;border-radius:3px;background:#5f6a88;border:1px solid #2f2f2f"></div>
<div class="a" style="left:123px;top:41px;width:80px;height:23px;border-radius:3px;background:#4a4a4a;border:1px solid #303030"></div>
<div class="a" style="left:41px;top:67px;width:79px;height:23px;border-radius:3px;background:#4a4a4a;border:1px solid #303030"></div>
<div class="a" style="left:40px;top:92px;width:165px;height:2px;background:#3a3a3a"></div>
<svg style="left:0;top:0" width="1" height="1"><g stroke="#c4c4c4" stroke-width="1.1" fill="none">
<path d="M45,61 l3,-9 l8,-7 l4,4 l-7,8z M45,61 l7,-7"/><path d="M127,61 l3,-9 l8,-7 l4,4 l-7,8z M130,52 l5,5"/>
<path d="M45,87 l3,-9 l8,-7 l4,4 l-7,8z M45,87 l7,-7"/></g>
<g fill="#c4c4c4"><path d="M54,46 l3,-3 l4,4 l-3,3z"/><path d="M136,46 l3,-3 l4,4 l-3,3z"/><path d="M54,72 l3,-3 l4,4 l-3,3z"/></g></svg>
<div class="t" style="left:66px;top:47px;font-size:11px;color:#eee">Pen</div>
<div class="t" style="left:148px;top:47px;font-size:11.5px;color:#e4e4e4">Marker</div>
<div class="t" style="left:66px;top:72px;font-size:11.5px;color:#e0e0e0;width:53px;overflow:hidden">Digital <span style="color:#999">Bas</span></div>
<div class="a" style="left:40px;top:94px;width:151px;height:35px;background:#5e6984"></div>
<div class="a" style="left:40px;top:129px;width:151px;height:1px;background:#2c2c2c"></div>
<div class="a" style="left:40px;top:165px;width:151px;height:1px;background:#2c2c2c"></div>
<div class="a" style="left:40px;top:201px;width:151px;height:1px;background:#2c2c2c"></div>
<div class="a" style="left:40px;top:237px;width:151px;height:1px;background:#2c2c2c"></div>
<div class="a" style="left:40px;top:273px;width:151px;height:1px;background:#2c2c2c"></div>
<div class="a" style="left:40px;top:309px;width:151px;height:1px;background:#2c2c2c"></div>
<div class="a" style="left:40px;top:345px;width:151px;height:1px;background:#2c2c2c"></div>
<div class="a" style="left:40px;top:381px;width:151px;height:1px;background:#2c2c2c"></div>
<div class="a" style="left:151px;top:111px;width:38px;height:16px;border-radius:2px;background:#535c73"></div>
<svg style="left:0;top:0" width="1" height="1"><path d="M54.0,109.6 L55.3,109.5 L56.5,109.3 L57.8,109.0 L59.0,108.6 L60.3,108.3 L61.6,107.8 L62.8,107.4 L64.1,107.0 L65.3,106.5 L66.6,106.0 L67.8,105.5 L69.1,105.1 L70.3,104.6 L71.6,104.2 L72.8,103.8 L74.1,103.4 L75.3,103.0 L76.5,102.7 L77.7,102.5 L78.9,102.2 L80.1,102.1 L81.3,102.0 L82.5,101.9 L83.7,101.9 L84.9,102.0 L86.1,102.1 L87.3,102.2 L88.5,102.4 L89.7,102.7 L90.9,103.0 L92.1,103.4 L93.3,103.7 L94.5,104.2 L95.7,104.6 L96.9,105.1 L98.1,105.6 L99.3,106.1 L100.6,106.6 L101.8,107.1 L103.0,107.6 L104.3,108.1 L105.5,108.6 L106.8,109.1 L108.1,109.5 L109.3,109.9 L110.6,110.2 L111.9,110.5 L113.2,110.8 L114.5,111.0 L115.7,111.1 L117.0,111.2 L118.3,111.2 L119.6,111.1 L120.9,111.0 L122.2,110.9 L123.5,110.6 L124.7,110.4 L126.0,110.0 L127.3,109.6 L128.5,109.2 L129.8,108.8 L131.0,108.3 L132.3,107.8 L133.5,107.2 L134.7,106.7 L135.9,106.1 L137.2,105.6 L138.4,105.0 L139.6,104.5 L140.8,104.0 L142.0,103.5 L143.3,103.1 L144.5,102.6 L145.7,102.2 L146.9,101.9 L148.1,101.6 L149.3,101.4 L150.5,101.2 L151.8,101.0 L153.0,100.9 L153.0,100.9 L151.8,100.8 L150.5,100.9 L149.3,100.9 L148.0,101.1 L146.7,101.3 L145.5,101.5 L144.2,101.8 L142.9,102.2 L141.7,102.5 L140.4,103.0 L139.2,103.4 L137.9,103.9 L136.7,104.3 L135.4,104.8 L134.2,105.3 L132.9,105.8 L131.7,106.2 L130.4,106.7 L129.2,107.1 L128.0,107.5 L126.8,107.8 L125.5,108.1 L124.3,108.4 L123.1,108.6 L121.9,108.8 L120.7,108.9 L119.6,109.0 L118.4,109.0 L117.2,109.0 L116.0,108.9 L114.8,108.7 L113.6,108.5 L112.4,108.3 L111.2,108.0 L110.0,107.6 L108.8,107.3 L107.6,106.8 L106.4,106.4 L105.2,105.9 L104.0,105.4 L102.7,104.9 L101.5,104.4 L100.2,103.9 L99.0,103.4 L97.7,102.9 L96.5,102.4 L95.2,102.0 L93.9,101.5 L92.7,101.2 L91.4,100.8 L90.1,100.5 L88.8,100.3 L87.5,100.1 L86.2,100.0 L85.0,99.9 L83.7,99.9 L82.4,99.9 L81.1,100.1 L79.8,100.2 L78.6,100.5 L77.3,100.7 L76.0,101.1 L74.8,101.5 L73.5,101.9 L72.3,102.3 L71.1,102.8 L69.8,103.4 L68.6,103.9 L67.4,104.4 L66.2,105.0 L64.9,105.5 L63.7,106.1 L62.5,106.6 L61.3,107.1 L60.1,107.6 L58.9,108.1 L57.7,108.5 L56.4,108.9 L55.2,109.3 L54.0,109.6Z" fill="#f0f0f0"/><path d="M54.0,145.6 L55.2,145.5 L56.5,145.2 L57.7,144.9 L59.0,144.5 L60.3,144.1 L61.5,143.7 L62.8,143.3 L64.0,142.8 L65.3,142.3 L66.5,141.8 L67.8,141.3 L69.0,140.8 L70.2,140.4 L71.5,139.9 L72.7,139.5 L74.0,139.1 L75.2,138.7 L76.4,138.4 L77.6,138.1 L78.9,137.9 L80.1,137.7 L81.3,137.6 L82.5,137.5 L83.7,137.5 L84.9,137.6 L86.1,137.7 L87.3,137.8 L88.5,138.0 L89.7,138.3 L91.0,138.6 L92.2,138.9 L93.4,139.3 L94.6,139.8 L95.8,140.2 L97.0,140.7 L98.3,141.2 L99.5,141.7 L100.7,142.2 L102.0,142.7 L103.2,143.2 L104.5,143.7 L105.7,144.2 L107.0,144.7 L108.2,145.1 L109.5,145.5 L110.7,145.8 L112.0,146.1 L113.3,146.4 L114.5,146.6 L115.8,146.7 L117.1,146.8 L118.3,146.8 L119.6,146.7 L120.9,146.6 L122.1,146.5 L123.4,146.3 L124.7,146.0 L125.9,145.7 L127.2,145.3 L128.4,144.9 L129.7,144.4 L130.9,144.0 L132.1,143.5 L133.4,143.0 L134.6,142.4 L135.8,141.9 L137.1,141.3 L138.3,140.8 L139.5,140.3 L140.7,139.8 L142.0,139.3 L143.2,138.9 L144.4,138.5 L145.6,138.1 L146.9,137.8 L148.1,137.5 L149.3,137.3 L150.5,137.1 L151.8,137.0 L153.0,136.9 L153.0,136.9 L151.8,136.9 L150.5,136.9 L149.3,137.0 L148.0,137.2 L146.8,137.4 L145.5,137.7 L144.3,138.0 L143.0,138.3 L141.8,138.7 L140.5,139.2 L139.2,139.6 L138.0,140.1 L136.7,140.6 L135.5,141.1 L134.3,141.6 L133.0,142.0 L131.8,142.5 L130.5,143.0 L129.3,143.4 L128.1,143.8 L126.9,144.2 L125.6,144.5 L124.4,144.8 L123.2,145.0 L122.0,145.2 L120.8,145.3 L119.6,145.4 L118.4,145.4 L117.2,145.4 L116.0,145.3 L114.7,145.1 L113.5,144.9 L112.3,144.7 L111.1,144.4 L109.9,144.1 L108.7,143.7 L107.5,143.3 L106.2,142.8 L105.0,142.3 L103.8,141.8 L102.6,141.3 L101.3,140.8 L100.1,140.3 L98.8,139.8 L97.6,139.3 L96.3,138.8 L95.1,138.4 L93.8,138.0 L92.6,137.6 L91.3,137.2 L90.0,136.9 L88.8,136.7 L87.5,136.5 L86.2,136.4 L85.0,136.3 L83.7,136.3 L82.4,136.3 L81.2,136.4 L79.9,136.6 L78.6,136.8 L77.4,137.1 L76.1,137.4 L74.9,137.8 L73.6,138.2 L72.4,138.6 L71.2,139.1 L69.9,139.6 L68.7,140.1 L67.5,140.6 L66.2,141.2 L65.0,141.7 L63.8,142.3 L62.6,142.8 L61.3,143.3 L60.1,143.8 L58.9,144.2 L57.7,144.6 L56.5,145.0 L55.2,145.3 L54.0,145.6Z" fill="#a8a8a8"/><path d="M54.0,181.6 L55.3,181.5 L56.5,181.3 L57.8,181.0 L59.0,180.7 L60.3,180.3 L61.6,179.9 L62.8,179.5 L64.1,179.0 L65.4,178.6 L66.6,178.1 L67.9,177.6 L69.1,177.2 L70.4,176.7 L71.6,176.3 L72.9,175.9 L74.1,175.5 L75.3,175.2 L76.5,174.9 L77.8,174.6 L79.0,174.4 L80.2,174.2 L81.4,174.1 L82.5,174.1 L83.7,174.1 L84.9,174.1 L86.1,174.2 L87.3,174.4 L88.4,174.6 L89.6,174.9 L90.8,175.2 L92.0,175.5 L93.2,175.9 L94.4,176.3 L95.6,176.8 L96.8,177.3 L98.0,177.8 L99.3,178.3 L100.5,178.8 L101.7,179.3 L103.0,179.8 L104.2,180.3 L105.5,180.8 L106.7,181.3 L108.0,181.7 L109.3,182.1 L110.6,182.4 L111.8,182.7 L113.1,183.0 L114.4,183.2 L115.7,183.3 L117.0,183.4 L118.3,183.4 L119.6,183.3 L120.9,183.2 L122.2,183.0 L123.5,182.8 L124.8,182.5 L126.0,182.2 L127.3,181.8 L128.6,181.4 L129.8,180.9 L131.1,180.4 L132.3,179.9 L133.5,179.3 L134.8,178.8 L136.0,178.2 L137.2,177.7 L138.4,177.1 L139.6,176.6 L140.9,176.1 L142.1,175.6 L143.3,175.1 L144.5,174.7 L145.7,174.3 L146.9,174.0 L148.1,173.7 L149.3,173.4 L150.5,173.2 L151.8,173.0 L153.0,172.9 L153.0,172.9 L151.8,172.8 L150.5,172.8 L149.2,172.9 L148.0,173.0 L146.7,173.2 L145.5,173.5 L144.2,173.8 L142.9,174.1 L141.7,174.5 L140.4,174.9 L139.1,175.3 L137.9,175.8 L136.6,176.2 L135.4,176.7 L134.1,177.2 L132.9,177.6 L131.6,178.1 L130.4,178.5 L129.2,179.0 L127.9,179.3 L126.7,179.7 L125.5,180.0 L124.3,180.3 L123.1,180.5 L121.9,180.6 L120.7,180.8 L119.6,180.8 L118.4,180.8 L117.2,180.8 L116.0,180.7 L114.8,180.5 L113.7,180.3 L112.5,180.1 L111.3,179.8 L110.1,179.4 L108.9,179.1 L107.7,178.7 L106.5,178.2 L105.3,177.7 L104.0,177.2 L102.8,176.7 L101.6,176.2 L100.3,175.7 L99.1,175.2 L97.8,174.7 L96.5,174.2 L95.3,173.8 L94.0,173.4 L92.7,173.0 L91.4,172.6 L90.1,172.3 L88.9,172.1 L87.6,171.9 L86.3,171.8 L85.0,171.7 L83.7,171.7 L82.4,171.8 L81.1,171.9 L79.8,172.1 L78.5,172.3 L77.3,172.6 L76.0,172.9 L74.8,173.3 L73.5,173.8 L72.3,174.2 L71.0,174.7 L69.8,175.2 L68.6,175.8 L67.3,176.3 L66.1,176.9 L64.9,177.5 L63.7,178.0 L62.5,178.6 L61.3,179.1 L60.1,179.6 L58.9,180.1 L57.6,180.5 L56.4,180.9 L55.2,181.3 L54.0,181.6Z" fill="#e8e8e8"/><path d="M54.0,217.6 L55.2,217.5 L56.5,217.2 L57.7,216.9 L59.0,216.5 L60.3,216.1 L61.5,215.7 L62.8,215.3 L64.0,214.8 L65.3,214.3 L66.5,213.8 L67.8,213.3 L69.0,212.8 L70.2,212.4 L71.5,211.9 L72.7,211.5 L74.0,211.1 L75.2,210.7 L76.4,210.4 L77.6,210.1 L78.9,209.9 L80.1,209.7 L81.3,209.6 L82.5,209.5 L83.7,209.5 L84.9,209.6 L86.1,209.7 L87.3,209.8 L88.5,210.0 L89.7,210.3 L91.0,210.6 L92.2,210.9 L93.4,211.3 L94.6,211.8 L95.8,212.2 L97.0,212.7 L98.3,213.2 L99.5,213.7 L100.7,214.2 L102.0,214.7 L103.2,215.2 L104.5,215.7 L105.7,216.2 L107.0,216.7 L108.2,217.1 L109.5,217.5 L110.7,217.8 L112.0,218.1 L113.3,218.4 L114.5,218.6 L115.8,218.7 L117.1,218.8 L118.3,218.8 L119.6,218.7 L120.9,218.6 L122.1,218.5 L123.4,218.3 L124.7,218.0 L125.9,217.7 L127.2,217.3 L128.4,216.9 L129.7,216.4 L130.9,216.0 L132.1,215.5 L133.4,215.0 L134.6,214.4 L135.8,213.9 L137.1,213.3 L138.3,212.8 L139.5,212.3 L140.7,211.8 L142.0,211.3 L143.2,210.9 L144.4,210.5 L145.6,210.1 L146.9,209.8 L148.1,209.5 L149.3,209.3 L150.5,209.1 L151.8,209.0 L153.0,208.9 L153.0,208.9 L151.8,208.9 L150.5,208.9 L149.3,209.0 L148.0,209.2 L146.8,209.4 L145.5,209.7 L144.3,210.0 L143.0,210.3 L141.8,210.7 L140.5,211.2 L139.2,211.6 L138.0,212.1 L136.7,212.6 L135.5,213.1 L134.3,213.6 L133.0,214.0 L131.8,214.5 L130.5,215.0 L129.3,215.4 L128.1,215.8 L126.9,216.2 L125.6,216.5 L124.4,216.8 L123.2,217.0 L122.0,217.2 L120.8,217.3 L119.6,217.4 L118.4,217.4 L117.2,217.4 L116.0,217.3 L114.7,217.1 L113.5,216.9 L112.3,216.7 L111.1,216.4 L109.9,216.1 L108.7,215.7 L107.5,215.3 L106.2,214.8 L105.0,214.3 L103.8,213.8 L102.6,213.3 L101.3,212.8 L100.1,212.3 L98.8,211.8 L97.6,211.3 L96.3,210.8 L95.1,210.4 L93.8,210.0 L92.6,209.6 L91.3,209.2 L90.0,208.9 L88.8,208.7 L87.5,208.5 L86.2,208.4 L85.0,208.3 L83.7,208.3 L82.4,208.3 L81.2,208.4 L79.9,208.6 L78.6,208.8 L77.4,209.1 L76.1,209.4 L74.9,209.8 L73.6,210.2 L72.4,210.6 L71.2,211.1 L69.9,211.6 L68.7,212.1 L67.5,212.6 L66.2,213.2 L65.0,213.7 L63.8,214.3 L62.6,214.8 L61.3,215.3 L60.1,215.8 L58.9,216.2 L57.7,216.6 L56.5,217.0 L55.2,217.3 L54.0,217.6Z" fill="#b8b8b8"/><path d="M49.0,254.4 L50.4,254.3 L51.8,254.1 L53.2,253.8 L54.6,253.4 L56.1,252.9 L57.5,252.5 L58.9,251.9 L60.3,251.4 L61.7,250.8 L63.1,250.2 L64.5,249.7 L65.9,249.1 L67.3,248.5 L68.6,248.0 L70.0,247.5 L71.3,247.1 L72.7,246.7 L74.0,246.3 L75.3,246.0 L76.5,245.8 L77.8,245.6 L79.0,245.5 L80.3,245.5 L81.5,245.5 L82.7,245.6 L83.9,245.8 L85.1,246.0 L86.3,246.3 L87.5,246.6 L88.7,247.0 L89.9,247.5 L91.2,248.0 L92.5,248.5 L93.7,249.1 L95.0,249.7 L96.3,250.4 L97.6,251.0 L99.0,251.7 L100.3,252.4 L101.7,253.0 L103.1,253.7 L104.4,254.3 L105.9,254.9 L107.3,255.5 L108.7,256.0 L110.2,256.5 L111.6,256.9 L113.1,257.2 L114.6,257.5 L116.1,257.6 L117.6,257.7 L119.1,257.7 L120.6,257.6 L122.1,257.5 L123.6,257.2 L125.1,256.9 L126.5,256.5 L128.0,256.0 L129.4,255.4 L130.8,254.8 L132.2,254.2 L133.6,253.5 L134.9,252.8 L136.2,252.1 L137.6,251.3 L138.9,250.6 L140.2,249.8 L141.5,249.1 L142.8,248.3 L144.1,247.6 L145.4,247.0 L146.6,246.3 L147.9,245.7 L149.2,245.2 L150.5,244.7 L151.8,244.2 L153.0,243.9 L154.4,243.5 L155.7,243.3 L157.0,243.0 L157.0,243.0 L155.6,242.8 L154.2,242.8 L152.9,242.8 L151.4,242.9 L150.0,243.1 L148.6,243.4 L147.2,243.7 L145.8,244.1 L144.3,244.6 L142.9,245.1 L141.5,245.6 L140.1,246.2 L138.7,246.8 L137.3,247.4 L135.9,248.0 L134.6,248.5 L133.2,249.1 L131.8,249.6 L130.5,250.1 L129.2,250.6 L127.9,251.0 L126.6,251.4 L125.4,251.7 L124.1,251.9 L122.9,252.1 L121.7,252.2 L120.5,252.3 L119.3,252.3 L118.1,252.2 L116.9,252.1 L115.7,251.9 L114.5,251.6 L113.3,251.3 L112.0,250.9 L110.8,250.5 L109.5,250.0 L108.2,249.5 L107.0,248.9 L105.6,248.3 L104.3,247.7 L103.0,247.0 L101.6,246.3 L100.3,245.7 L98.9,245.0 L97.5,244.4 L96.1,243.7 L94.6,243.1 L93.2,242.6 L91.8,242.1 L90.3,241.6 L88.8,241.2 L87.3,240.9 L85.8,240.7 L84.3,240.5 L82.8,240.5 L81.3,240.5 L79.8,240.6 L78.4,240.8 L76.9,241.0 L75.5,241.4 L74.0,241.8 L72.6,242.3 L71.2,242.8 L69.9,243.4 L68.5,244.1 L67.2,244.8 L65.8,245.5 L64.5,246.2 L63.2,247.0 L61.9,247.8 L60.6,248.5 L59.3,249.3 L58.0,250.0 L56.7,250.7 L55.4,251.4 L54.2,252.1 L52.9,252.7 L51.6,253.3 L50.3,253.9 L49.0,254.4Z" fill="#ffffff"/><path d="M58.0,288.8 L59.1,288.7 L60.3,288.5 L61.4,288.2 L62.5,288.0 L63.6,287.6 L64.8,287.3 L65.9,286.9 L67.0,286.5 L68.2,286.1 L69.3,285.7 L70.4,285.3 L71.5,284.8 L72.6,284.4 L73.8,284.1 L74.9,283.7 L75.9,283.4 L77.0,283.1 L78.1,282.8 L79.2,282.6 L80.2,282.4 L81.3,282.3 L82.4,282.2 L83.4,282.1 L84.4,282.2 L85.5,282.2 L86.5,282.3 L87.5,282.5 L88.6,282.7 L89.6,282.9 L90.6,283.2 L91.7,283.5 L92.7,283.9 L93.8,284.2 L94.8,284.7 L95.9,285.1 L97.0,285.5 L98.1,286.0 L99.2,286.5 L100.3,287.0 L101.4,287.4 L102.5,287.9 L103.6,288.3 L104.7,288.7 L105.9,289.1 L107.0,289.5 L108.2,289.8 L109.3,290.1 L110.5,290.3 L111.7,290.5 L112.8,290.6 L114.0,290.7 L115.2,290.7 L116.3,290.6 L117.5,290.5 L118.7,290.3 L119.8,290.1 L121.0,289.8 L122.1,289.5 L123.2,289.2 L124.4,288.8 L125.5,288.3 L126.6,287.9 L127.7,287.4 L128.8,286.9 L129.9,286.4 L131.0,285.8 L132.1,285.3 L133.1,284.8 L134.2,284.3 L135.3,283.8 L136.3,283.4 L137.4,282.9 L138.5,282.5 L139.5,282.2 L140.6,281.8 L141.7,281.6 L142.7,281.3 L143.8,281.1 L144.9,280.9 L146.0,280.8 L146.0,280.8 L144.9,280.7 L143.8,280.7 L142.7,280.7 L141.5,280.8 L140.4,281.0 L139.3,281.2 L138.1,281.5 L137.0,281.8 L135.9,282.1 L134.7,282.5 L133.6,282.8 L132.5,283.3 L131.3,283.7 L130.2,284.1 L129.1,284.5 L128.0,284.9 L126.9,285.4 L125.8,285.7 L124.7,286.1 L123.6,286.4 L122.6,286.8 L121.5,287.0 L120.4,287.3 L119.4,287.4 L118.3,287.6 L117.3,287.7 L116.3,287.7 L115.2,287.7 L114.2,287.7 L113.2,287.6 L112.1,287.5 L111.1,287.3 L110.1,287.1 L109.0,286.8 L108.0,286.5 L106.9,286.1 L105.9,285.8 L104.8,285.4 L103.7,284.9 L102.6,284.5 L101.5,284.0 L100.4,283.5 L99.3,283.1 L98.2,282.6 L97.1,282.2 L96.0,281.7 L94.8,281.3 L93.7,280.9 L92.5,280.6 L91.4,280.3 L90.2,280.0 L89.0,279.8 L87.9,279.6 L86.7,279.5 L85.5,279.4 L84.4,279.4 L83.2,279.5 L82.0,279.6 L80.9,279.8 L79.8,280.0 L78.6,280.3 L77.5,280.6 L76.4,281.0 L75.3,281.4 L74.1,281.8 L73.0,282.3 L72.0,282.8 L70.9,283.3 L69.8,283.8 L68.7,284.3 L67.6,284.8 L66.6,285.4 L65.5,285.9 L64.4,286.4 L63.4,286.8 L62.3,287.3 L61.2,287.7 L60.1,288.1 L59.1,288.4 L58.0,288.8Z" fill="#f4f4f4"/><path d="M53.0,326.0 L54.4,326.1 L55.7,326.0 L57.1,325.8 L58.5,325.6 L59.9,325.3 L61.3,325.0 L62.6,324.6 L64.0,324.2 L65.4,323.7 L66.7,323.3 L68.1,322.8 L69.4,322.4 L70.7,322.0 L72.0,321.6 L73.3,321.2 L74.5,320.9 L75.7,320.6 L76.9,320.4 L78.1,320.2 L79.2,320.1 L80.3,320.0 L81.4,320.0 L82.4,320.1 L83.4,320.1 L84.4,320.3 L85.4,320.5 L86.4,320.7 L87.4,321.0 L88.4,321.3 L89.5,321.7 L90.5,322.1 L91.6,322.5 L92.7,323.0 L93.8,323.6 L95.0,324.1 L96.1,324.7 L97.3,325.3 L98.6,325.9 L99.8,326.6 L101.1,327.2 L102.4,327.8 L103.8,328.4 L105.1,329.0 L106.5,329.5 L108.0,330.0 L109.4,330.4 L110.9,330.8 L112.4,331.1 L113.9,331.3 L115.4,331.5 L117.0,331.5 L118.5,331.5 L120.1,331.4 L121.6,331.2 L123.1,330.9 L124.6,330.5 L126.0,330.1 L127.4,329.5 L128.8,328.9 L130.2,328.3 L131.5,327.6 L132.8,326.9 L134.1,326.2 L135.3,325.4 L136.6,324.7 L137.8,323.9 L138.9,323.1 L140.1,322.4 L141.3,321.6 L142.4,320.9 L143.6,320.2 L144.7,319.5 L145.8,318.9 L147.0,318.3 L148.1,317.8 L149.2,317.2 L150.4,316.8 L151.6,316.3 L152.8,315.9 L154.0,315.5 L154.0,315.5 L152.7,315.1 L151.4,314.9 L150.0,314.8 L148.7,314.8 L147.3,314.9 L145.9,315.0 L144.5,315.3 L143.1,315.5 L141.7,315.9 L140.3,316.3 L138.9,316.7 L137.6,317.1 L136.2,317.6 L134.9,318.0 L133.6,318.5 L132.3,318.9 L131.0,319.4 L129.7,319.8 L128.5,320.2 L127.3,320.5 L126.1,320.8 L125.0,321.0 L123.9,321.2 L122.8,321.4 L121.8,321.5 L120.8,321.5 L119.8,321.5 L118.8,321.5 L117.8,321.4 L116.8,321.3 L115.8,321.1 L114.8,320.8 L113.8,320.5 L112.7,320.2 L111.7,319.8 L110.6,319.4 L109.4,318.9 L108.3,318.4 L107.1,317.9 L105.9,317.3 L104.6,316.7 L103.4,316.1 L102.1,315.5 L100.8,314.9 L99.4,314.3 L98.0,313.7 L96.6,313.1 L95.2,312.6 L93.8,312.2 L92.3,311.7 L90.8,311.4 L89.3,311.1 L87.8,310.9 L86.2,310.8 L84.7,310.8 L83.2,310.9 L81.7,311.0 L80.2,311.3 L78.7,311.6 L77.3,312.0 L75.9,312.5 L74.5,313.0 L73.2,313.6 L71.9,314.2 L70.6,314.9 L69.3,315.6 L68.1,316.4 L66.9,317.1 L65.7,317.9 L64.5,318.7 L63.3,319.5 L62.2,320.3 L61.0,321.1 L59.9,321.8 L58.8,322.5 L57.6,323.3 L56.5,323.9 L55.3,324.6 L54.2,325.3 L53.0,326.0Z" fill="#ffffff"/><path d="M55.0,361.1 L56.2,361.1 L57.5,361.0 L58.8,360.8 L60.0,360.6 L61.3,360.3 L62.6,359.9 L63.8,359.6 L65.1,359.2 L66.3,358.8 L67.6,358.4 L68.8,358.0 L70.1,357.6 L71.3,357.2 L72.5,356.8 L73.7,356.5 L74.9,356.1 L76.1,355.9 L77.2,355.6 L78.4,355.4 L79.5,355.3 L80.6,355.2 L81.7,355.1 L82.8,355.1 L83.9,355.1 L84.9,355.2 L86.0,355.4 L87.1,355.6 L88.1,355.8 L89.2,356.1 L90.3,356.4 L91.3,356.7 L92.4,357.1 L93.6,357.5 L94.7,358.0 L95.8,358.5 L97.0,359.0 L98.1,359.5 L99.3,360.0 L100.5,360.5 L101.7,361.0 L103.0,361.5 L104.2,362.0 L105.5,362.5 L106.7,362.9 L108.0,363.3 L109.3,363.7 L110.6,364.0 L112.0,364.2 L113.3,364.4 L114.6,364.5 L116.0,364.6 L117.3,364.6 L118.7,364.5 L120.0,364.3 L121.3,364.1 L122.7,363.8 L124.0,363.5 L125.2,363.1 L126.5,362.7 L127.8,362.2 L129.0,361.7 L130.2,361.1 L131.4,360.6 L132.6,360.0 L133.8,359.4 L135.0,358.7 L136.1,358.1 L137.3,357.5 L138.4,356.9 L139.6,356.4 L140.7,355.8 L141.8,355.3 L142.9,354.8 L144.1,354.4 L145.2,353.9 L146.3,353.6 L147.5,353.2 L148.6,352.9 L149.8,352.7 L151.0,352.4 L151.0,352.4 L149.8,352.2 L148.6,352.1 L147.3,352.1 L146.1,352.1 L144.8,352.2 L143.5,352.4 L142.3,352.6 L141.0,352.9 L139.7,353.2 L138.4,353.6 L137.2,354.0 L135.9,354.4 L134.7,354.8 L133.4,355.2 L132.2,355.6 L131.0,356.0 L129.8,356.4 L128.6,356.8 L127.4,357.2 L126.2,357.5 L125.1,357.8 L124.0,358.0 L122.8,358.3 L121.7,358.4 L120.7,358.6 L119.6,358.6 L118.5,358.7 L117.5,358.6 L116.4,358.6 L115.4,358.5 L114.3,358.3 L113.2,358.1 L112.2,357.8 L111.1,357.6 L110.0,357.2 L108.9,356.8 L107.7,356.4 L106.6,356.0 L105.4,355.5 L104.3,355.0 L103.1,354.5 L101.9,354.0 L100.7,353.5 L99.4,353.0 L98.2,352.5 L96.9,352.0 L95.6,351.6 L94.4,351.2 L93.1,350.8 L91.7,350.5 L90.4,350.2 L89.1,349.9 L87.7,349.8 L86.4,349.7 L85.1,349.6 L83.7,349.7 L82.4,349.8 L81.1,349.9 L79.8,350.2 L78.5,350.4 L77.2,350.8 L76.0,351.2 L74.7,351.6 L73.5,352.1 L72.3,352.6 L71.1,353.2 L69.9,353.8 L68.7,354.4 L67.6,355.0 L66.4,355.6 L65.3,356.2 L64.1,356.9 L63.0,357.5 L61.8,358.0 L60.7,358.6 L59.6,359.2 L58.4,359.7 L57.3,360.2 L56.2,360.7 L55.0,361.1Z" fill="#ffffff"/></svg>
<div class="t" style="right:1723px;top:114px;font-size:11.5px;color:#e8e8e8">G-pen</div>
<div class="t" style="right:1723px;top:150px;font-size:11.2px;color:#e0e0e0">Real G-Pen</div>
<div class="t" style="right:1723px;top:186px;font-size:11.2px;color:#e0e0e0">Mapping pen</div>
<div class="t" style="right:1723px;top:222px;font-size:11.2px;color:#e0e0e0">Turnip pen</div>
<div class="t" style="right:1723px;top:258px;font-size:11.2px;color:#e0e0e0">Calligraphy</div>
<div class="t" style="right:1723px;top:294px;font-size:11.2px;color:#e0e0e0">Tapered Pen</div>
<div class="t" style="right:1723px;top:330px;font-size:11.2px;color:#e0e0e0">For effect line</div>
<div class="t" style="right:1723px;top:366px;font-size:11.2px;color:#e0e0e0">Textured pen</div>
<svg style="left:0;top:0" width="1" height="1"><g stroke="#c0c0c0" stroke-width="1.1" fill="none">
<rect x="149.5" y="419.5" width="11" height="11" rx="2"/><path d="M155,421v6M152.5,424.5l2.5,2.5l2.5,-2.5"/>
<rect x="168.5" y="421.5" width="9" height="9" rx="1.5"/><rect x="171.5" y="418.5" width="9" height="9" rx="1.5" fill="#505050"/><path d="M176,420v6M173,423h6"/>
<path d="M189.5,421.5h12M191,421.5l1,9.5h7l1,-9.5M193.5,419.5h4"/><path d="M195.5,423v7" stroke="#888" stroke-width="1.6"/>
</g></svg>

<!-- ===== left tool icons ===== -->
<div class="a" style="left:0;top:20px;width:16px;height:14px;background:#3a3a3a"></div>
<svg style="left:0;top:0" width="40" height="660">
<g stroke="#9a9a9a" stroke-width="1" fill="none">
<path d="M3,24.5h7M3,27h7M3,29.5h7"/>
</g>
<g fill="#c0c0c0" stroke="none"><path d="M20,31 l1.5,-4 L33,15.5 l2.5,2.5 L24,29 Z"/></g><g fill="#c4c4c4"><path d="M11,76 c-1,-2 -2,-4 -1,-5 c1,-1 2,0 3,2 l1,1 v-7 c0,-1.5 2,-1.5 2,0 v5 v-7 c0,-1.5 2,-1.5 2,0 v7 v-6 c0,-1.5 2,-1.5 2,0 v6 v-4 c0,-1.5 2,-1.5 2,0 v7 c0,4 -3,7 -6,7 c-3,0 -5,-2 -7,-6z"/></g>
<g class="ic" stroke="#c4c4c4" stroke-width="1.1"><path d="M8,104 v-8 l6,-3 l6,3 v8 l-6,3z M8,96 l6,3 l6,-3 M14,99 v8"/></g><path d="M17,99 l9,5 l-4,1 l2,4 l-2,1 l-2,-4 l-3,2z" fill="#c4c4c4"/>
<g class="ic" stroke="#c4c4c4">
<circle cx="15.5" cy="49.5" r="6"/><path d="M20,54 l5,5" stroke-width="1.8"/>
<path d="M10,128h16M18,118v18M10,128l3,-2.5M10,128l3,2.5M26,128l-3,-2.5M26,128l-3,2.5M18,118l-2.5,3M18,118l2.5,3M18,136l-2.5,-3M18,136l2.5,-3"/>

<path d="M11.8,156.8 L14.1,149.8 L18.6,145.8 L23.5,150.9 L19.5,155 Z M11.8,156.8 L17,152" stroke-width="1.1"/><path d="M20.8,143.1 L26.3,147.8 L23.5,150.9 L18.4,146.2 Z" fill="#c4c4c4" stroke="none"/><path d="M11,152 C7,153 7,159 11,160 H27" stroke-dasharray="2 1.5" stroke-width="1.2"/>
<path d="M7.8,185.8 L16.9,177.2" stroke-width="1"/><path d="M18.8,168v14M11.8,175h14M14,170l9.6,9.6M23.6,170l-9.6,9.6" stroke-width="1.3"/><circle cx="18.8" cy="175" r="2.2" fill="#c4c4c4"/>
<path d="M7.8,210.9 L10,206 L18,198.5 L21,201.5 L13,209 Z" stroke-width="1.1"/><path d="M17,197.5 L22,202.5" stroke-width="2.2"/><path d="M21,198 L24.8,194.2" stroke-width="3.2" stroke-linecap="round"/>
<path d="M0,215.5 h34" stroke="#5a5a5a"/>
</g>
<rect x="5.5" y="218.5" width="23" height="23" fill="#5f6a88" stroke="#2a2a2a"/>
<g class="ic" stroke="#c8c8c8">
<path d="M8,239 L10.8,230.5 L16.6,225 L22.8,231.2 L17.3,237 Z M8,239 L14.5,232.5" stroke-width="1.2"/><path d="M19,221.5 L26,228.5 L23,231.3 L16.3,224.3 Z" fill="#c8c8c8" stroke="none"/>
<path d="M7.8,263.5 L16.5,249.8 L25.9,251.8 Z" stroke-width="1.2"/><path d="M20.4,245.5 L26.3,251.4 L21,253 L19,250.5 L16.5,250 Z" fill="#c4c4c4" stroke="none"/>
<path d="M0,392.5 h34" stroke="#5a5a5a"/>
<path d="M0,590.5 h0"/>
</g>
<g fill="#bcbcbc" stroke="none">
<path d="M22.7,271 L25.9,274.5 L20,283 L14.9,289 L7.8,282.4 L14,276 Z M11.5,281.5 L15.5,286 L19.5,281.5 L15.5,277.5 Z" fill-rule="evenodd"/>
<path d="M13,313.7 V308 C13,303.5 25.9,303.5 25.9,308 V313.7 Z M14.3,309 V312.3 H24.6 V309 Z" fill-rule="evenodd"/><rect x="18" y="298" width="2.8" height="4.5" rx="1"/><rect x="8" y="295" width="1.6" height="1.6"/><rect x="8" y="298.3" width="1.6" height="1.6"/><rect x="8" y="301.6" width="1.6" height="1.6"/><rect x="8" y="304.9" width="1.6" height="1.6"/><rect x="11" y="297" width="1.4" height="1.4"/><rect x="11" y="300" width="1.4" height="1.4"/><rect x="11" y="303" width="1.4" height="1.4"/><rect x="13.5" y="298.5" width="1.6" height="1.6"/><rect x="13.5" y="302" width="1.6" height="1.6"/>
<path d="M15.3,321.3 L16.5,327.3 L22.5,328.5 L16.5,329.7 L15.3,335.7 L14.1,329.7 L8.1,328.5 L14.1,327.3 Z"/>
<path d="M22.4,331.7 L23,334.6 L25.9,335.2 L23,335.8 L22.4,338.7 L21.8,335.8 L18.9,335.2 L21.8,334.6 Z"/>
<path d="M18,346.2 L25.9,354 L18.5,361.4 L10.6,353.6 Z"/>
<path d="M13,372 C11,376 8,380 8,383 C8,386 10.5,388 13,388 C15,388 16,387 17,386 C18,387 19,388 21,388 C23.5,388 26,386 26,383 C26,380 23,376 21,372 C19.5,375 18,377 17,378.5 C16,377 14.5,375 13,372z" fill="url(#gr2)" stroke="#d0d0d0" stroke-width="1" stroke-dasharray="1.5 0.8"/>
<path d="M8.5,406 L24.8,405.8 L26.8,408.9 L19.1,416.6 L11.3,409.6 L11.1,413 Q9.5,415 8.3,412 z"/><path d="M9.5,406 L16.9,399.5 L25,406.5" fill="none" stroke="#bcbcbc" stroke-width="1.5"/>
<rect x="9.5" y="425" width="15.5" height="15.5" rx="1.5" fill="url(#gr1)"/>
<path d="M13,547 l-5,0 M0,0"/>
</g>
<defs><linearGradient id="gr2" x1="0" y1="0" x2="1" y2="0"><stop offset="0" stop-color="#aaa"/><stop offset="1" stop-color="#555"/></linearGradient><linearGradient id="gr1" x1="0" y1="0" x2="1" y2="1"><stop offset="0" stop-color="#5a5a5a"/><stop offset="1" stop-color="#c8c8c8"/></linearGradient></defs>
<g class="ic" stroke="#c0c0c0">

<path d="M12.5,351.7 L8.4,355.8 L14.8,362.2 L18.9,358.1 M14.8,363.5 H24.3" stroke-width="1.1"/>
<circle cx="16.5" cy="458" r="8.5"/>
<rect x="9.5" y="475.5" width="15" height="14" rx="1.5"/><path d="M9.5,481h15M17,481l-1.5,8.5M9.5,484h7"/>
<path d="M10,500.5 h16 l-14,15 z" stroke-width="2"/>
<path d="M9,543 l8,-18 l8,18 M11.5,537 h11" stroke-width="1.8"/>
<ellipse cx="17" cy="556" rx="8" ry="5.5"/><path d="M12,560 l-2,4 l5,-2.5"/>
<path d="M10,574 v13 M10,576 h16" stroke-width="1.3"/><rect x="8" y="573" width="4" height="4" fill="#c0c0c0"/><path d="M14,579 l10,4 l-4,1.5 l-1.5,4z" fill="#c0c0c0"/>
</g>
</svg>
<div class="a" style="left:13px;top:610px;width:22px;height:22px;border:1px solid #5a5a5a;border-radius:3px;background:#484848"></div>
<div class="a" style="left:16px;top:613px;width:16px;height:16px;background:#fff"></div>
<div class="a" style="left:0px;top:599px;width:21px;height:21px;border:2px solid #8499c8;border-radius:3px;background:#000"></div>
<div class="a" style="left:1px;top:635px;width:34px;height:11px;border:1px solid #6a6a6a;border-radius:5px"></div>
<div class="a" style="left:4px;top:638px;width:28px;height:5px;background:repeating-linear-gradient(90deg,#ddd 0 5px,#555 5px 7px)"></div>


</body></html>
